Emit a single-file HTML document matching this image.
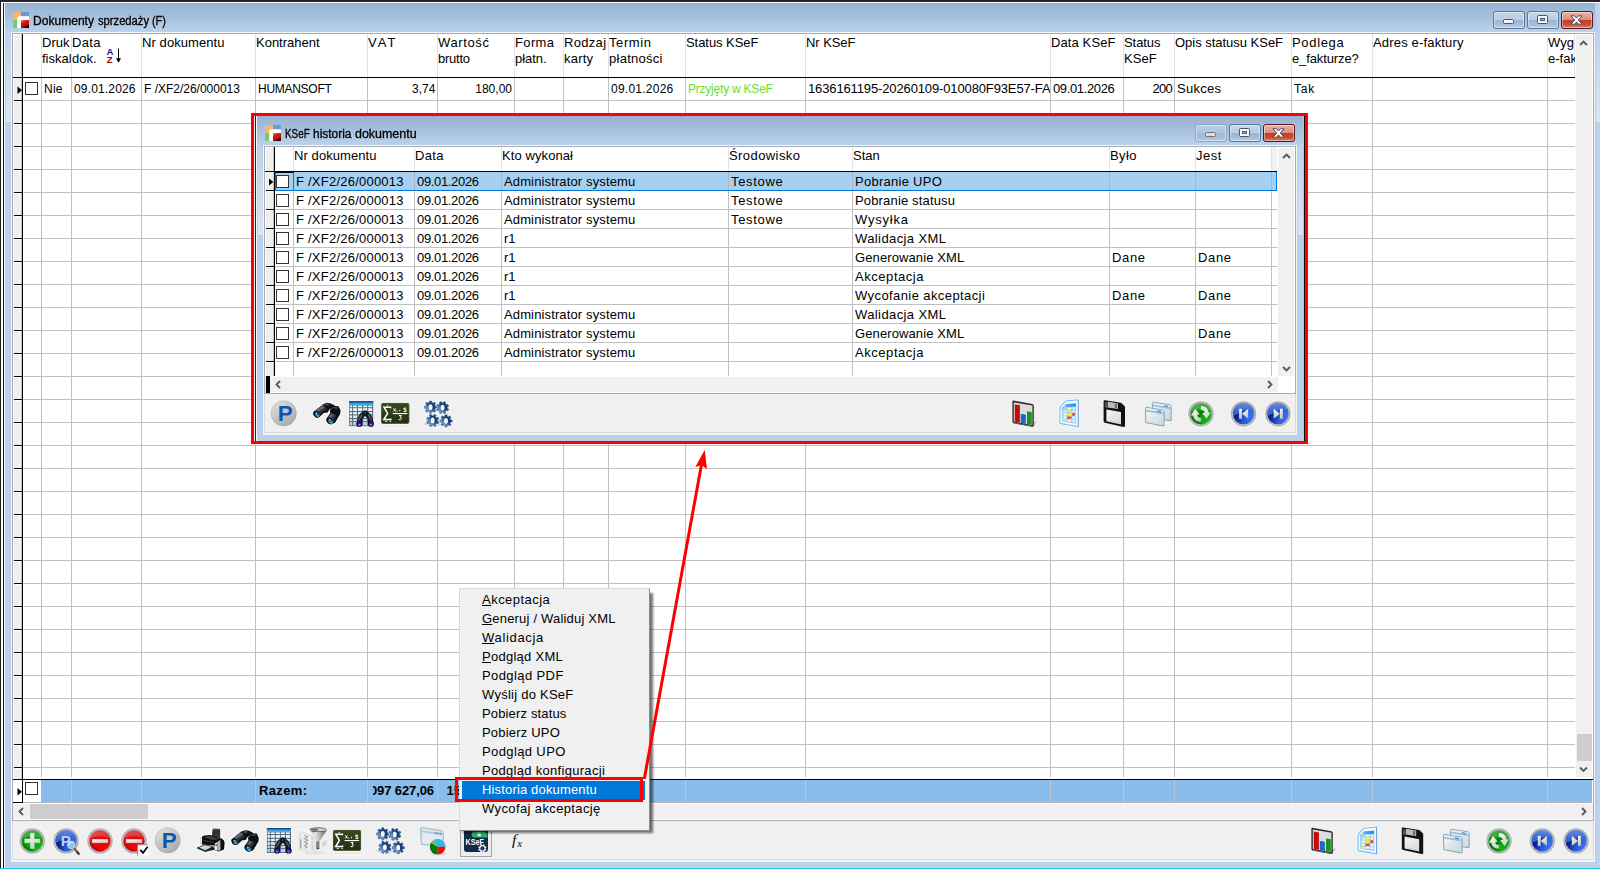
<!DOCTYPE html>
<html><head><meta charset="utf-8"><title>Dokumenty sprzedaży (F)</title>
<style>
html,body{margin:0;padding:0;}
body{width:1600px;height:869px;overflow:hidden;position:relative;background:#fff;font-family:"Liberation Sans",sans-serif;}
.a{position:absolute;}
.t{position:absolute;white-space:nowrap;color:#000;font-family:"Liberation Sans",sans-serif;}
.c{font-size:12px;line-height:14px;}
.d{font-size:13px;line-height:15px;}
.h{font-size:13px;line-height:16px;}
.w{font-size:12px;line-height:15px;-webkit-text-stroke:0.3px #000;}
.m{font-size:13px;line-height:19px;}
.b{font-size:13px;line-height:15px;font-weight:bold;}
svg{position:absolute;overflow:visible;left:0;top:0;}
u{text-decoration:underline;text-underline-offset:1px;}
</style></head>
<body>
<div class="a" style="left:0px;top:0px;width:1600px;height:869px;background:#b9d1ea;"></div>
<div class="a" style="left:0px;top:3px;width:1600px;height:30px;background:linear-gradient(#98b3d2,#a3bddb 40%,#b2cae5 75%,#bcd3eb);"></div>
<div class="a" style="left:0px;top:0px;width:1600px;height:2px;background:#262626;"></div>
<div class="a" style="left:0px;top:2px;width:1600px;height:1px;background:#ffffff;"></div>
<div class="a" style="left:0px;top:0px;width:1px;height:869px;background:#1a1a1a;"></div>
<div class="a" style="left:1px;top:3px;width:2px;height:866px;background:#ffffff;"></div>
<div class="a" style="left:3px;top:3px;width:1px;height:866px;background:#1a1a1a;"></div>
<div class="a" style="left:4px;top:3px;width:1px;height:866px;background:#f2f7fc;"></div>
<div class="a" style="left:1595px;top:3px;width:5px;height:866px;background:linear-gradient(90deg,#b5ceea,#bfd5ec);"></div>
<div class="a" style="left:0px;top:868px;width:1600px;height:1px;background:#2fc0de;"></div>
<div class="a" style="left:6px;top:33px;width:5px;height:89px;background:linear-gradient(#bcd3eb,#d9e5f3);"></div>
<div class="a" style="left:1596px;top:33px;width:4px;height:89px;background:linear-gradient(#bcd3eb,#d9e5f3);"></div>
<svg width="1600" height="869"><g transform="translate(13,12)"><rect x="0" y="0" width="8" height="8" fill="#fbb565"/><rect x="8" y="0" width="8" height="4.4" fill="#639bdb"/><rect x="0" y="8" width="4.2" height="8" fill="#6fcf6f"/><path d="M4.2 16V6.4Q4.2 4.2 6.4 4.2H16V16Z" fill="#fff"/><defs><linearGradient id="gAppR" x1="0" y1="0" x2=".5" y2="1"><stop offset="0" stop-color="#f08a8a"/><stop offset=".35" stop-color="#dc1c1c"/><stop offset=".75" stop-color="#b01010"/><stop offset="1" stop-color="#2a0404"/></linearGradient></defs><rect x="8" y="8" width="8" height="8" fill="url(#gAppR)"/></g></svg>
<div class="t w" style="left:33px;top:14px;transform:scaleX(1.0049);transform-origin:0 0;">Dokumenty</div>
<div class="t w" style="left:98px;top:14px;transform:scaleX(0.9323);transform-origin:0 0;">sprzedaży</div>
<div class="t w" style="left:152px;top:14px;transform:scaleX(0.9068);transform-origin:0 0;">(F)</div>
<div class="a" style="left:1493px;top:11px;width:32px;height:18px;box-sizing:border-box;border:1px solid #5d7596;border-radius:3px;background:#5d7596;overflow:hidden;"><div class="a" style="left:0;top:0;width:30px;height:8px;background:linear-gradient(#c4d6ea,#b9cde4);"></div><div class="a" style="left:0;top:8px;width:30px;height:8px;background:linear-gradient(#9ab5d3,#a3bcd9 55%,#b9cfe7);"></div><div class="a" style="left:0;top:0;width:28px;height:14px;border:1px solid rgba(255,255,255,.45);border-radius:2px;"></div></div>
<div class="a" style="left:1527px;top:11px;width:32px;height:18px;box-sizing:border-box;border:1px solid #5d7596;border-radius:3px;background:#5d7596;overflow:hidden;"><div class="a" style="left:0;top:0;width:30px;height:8px;background:linear-gradient(#c4d6ea,#b9cde4);"></div><div class="a" style="left:0;top:8px;width:30px;height:8px;background:linear-gradient(#9ab5d3,#a3bcd9 55%,#b9cfe7);"></div><div class="a" style="left:0;top:0;width:28px;height:14px;border:1px solid rgba(255,255,255,.45);border-radius:2px;"></div></div>
<div class="a" style="left:1561px;top:11px;width:32px;height:18px;box-sizing:border-box;border:1px solid #5b1626;border-radius:3px;background:#5b1626;overflow:hidden;"><div class="a" style="left:0;top:0;width:30px;height:8px;background:linear-gradient(#eab2a3,#dc8e7c);"></div><div class="a" style="left:0;top:8px;width:30px;height:8px;background:linear-gradient(#bf3d25,#c84e34 55%,#d98069);"></div><div class="a" style="left:0;top:0;width:28px;height:14px;border:1px solid rgba(255,255,255,.45);border-radius:2px;"></div></div>
<svg width="1600" height="869"><rect x="1503.5" y="19.5" width="10" height="4" rx="1" fill="#f4f4f2" stroke="#4a5568" stroke-width="1"/><rect x="1537.5" y="15.5" width="10" height="8" rx="1" fill="#f6f6f4" stroke="#4a5568" stroke-width="1"/><rect x="1540.5" y="18.5" width="4" height="2" fill="#a9c0dc" stroke="#4a5a78" stroke-width="1"/><path d="M1570.9 15.8h3.8l1.8 2.3 1.8-2.3h3.8l-3.8 4.2 3.8 4.2h-3.8l-1.8-2.3-1.8 2.3h-3.8l3.8-4.2z" fill="#fdfdfd" stroke="#4a4e64" stroke-width="1" stroke-linejoin="round"/></svg>
<div class="a" style="left:11px;top:32px;width:1584px;height:830px;background:#f3f5f8;"></div>
<div class="a" style="left:12px;top:33px;width:1582px;height:788px;background:#a9abb3;"></div>
<div class="a" style="left:13px;top:34px;width:1580px;height:786px;background:#ffffff;"></div>
<div class="a" style="left:13px;top:34px;width:9px;height:746px;background:#efefef;"></div>
<div class="a" style="left:13px;top:34px;width:1px;height:746px;background:#fff;"></div>
<div class="a" style="left:13px;top:34px;width:9px;height:1px;background:#fff;"></div>
<div class="a" style="left:21px;top:34px;width:1px;height:746px;background:#c4c4c4;"></div>
<div class="a" style="left:22px;top:34px;width:1px;height:746px;background:#000;"></div>
<div class="a" style="left:23px;top:100px;width:1552px;height:1px;background:#c0c0c0;"></div>
<div class="a" style="left:14px;top:100px;width:8px;height:1px;background:#000;"></div>
<div class="a" style="left:14px;top:101px;width:7px;height:1px;background:#fff;"></div>
<div class="a" style="left:23px;top:123px;width:1552px;height:1px;background:#c0c0c0;"></div>
<div class="a" style="left:14px;top:123px;width:8px;height:1px;background:#000;"></div>
<div class="a" style="left:14px;top:124px;width:7px;height:1px;background:#fff;"></div>
<div class="a" style="left:23px;top:146px;width:1552px;height:1px;background:#c0c0c0;"></div>
<div class="a" style="left:14px;top:146px;width:8px;height:1px;background:#000;"></div>
<div class="a" style="left:14px;top:147px;width:7px;height:1px;background:#fff;"></div>
<div class="a" style="left:23px;top:169px;width:1552px;height:1px;background:#c0c0c0;"></div>
<div class="a" style="left:14px;top:169px;width:8px;height:1px;background:#000;"></div>
<div class="a" style="left:14px;top:170px;width:7px;height:1px;background:#fff;"></div>
<div class="a" style="left:23px;top:192px;width:1552px;height:1px;background:#c0c0c0;"></div>
<div class="a" style="left:14px;top:192px;width:8px;height:1px;background:#000;"></div>
<div class="a" style="left:14px;top:193px;width:7px;height:1px;background:#fff;"></div>
<div class="a" style="left:23px;top:215px;width:1552px;height:1px;background:#c0c0c0;"></div>
<div class="a" style="left:14px;top:215px;width:8px;height:1px;background:#000;"></div>
<div class="a" style="left:14px;top:216px;width:7px;height:1px;background:#fff;"></div>
<div class="a" style="left:23px;top:238px;width:1552px;height:1px;background:#c0c0c0;"></div>
<div class="a" style="left:14px;top:238px;width:8px;height:1px;background:#000;"></div>
<div class="a" style="left:14px;top:239px;width:7px;height:1px;background:#fff;"></div>
<div class="a" style="left:23px;top:261px;width:1552px;height:1px;background:#c0c0c0;"></div>
<div class="a" style="left:14px;top:261px;width:8px;height:1px;background:#000;"></div>
<div class="a" style="left:14px;top:262px;width:7px;height:1px;background:#fff;"></div>
<div class="a" style="left:23px;top:284px;width:1552px;height:1px;background:#c0c0c0;"></div>
<div class="a" style="left:14px;top:284px;width:8px;height:1px;background:#000;"></div>
<div class="a" style="left:14px;top:285px;width:7px;height:1px;background:#fff;"></div>
<div class="a" style="left:23px;top:307px;width:1552px;height:1px;background:#c0c0c0;"></div>
<div class="a" style="left:14px;top:307px;width:8px;height:1px;background:#000;"></div>
<div class="a" style="left:14px;top:308px;width:7px;height:1px;background:#fff;"></div>
<div class="a" style="left:23px;top:330px;width:1552px;height:1px;background:#c0c0c0;"></div>
<div class="a" style="left:14px;top:330px;width:8px;height:1px;background:#000;"></div>
<div class="a" style="left:14px;top:331px;width:7px;height:1px;background:#fff;"></div>
<div class="a" style="left:23px;top:353px;width:1552px;height:1px;background:#c0c0c0;"></div>
<div class="a" style="left:14px;top:353px;width:8px;height:1px;background:#000;"></div>
<div class="a" style="left:14px;top:354px;width:7px;height:1px;background:#fff;"></div>
<div class="a" style="left:23px;top:376px;width:1552px;height:1px;background:#c0c0c0;"></div>
<div class="a" style="left:14px;top:376px;width:8px;height:1px;background:#000;"></div>
<div class="a" style="left:14px;top:377px;width:7px;height:1px;background:#fff;"></div>
<div class="a" style="left:23px;top:399px;width:1552px;height:1px;background:#c0c0c0;"></div>
<div class="a" style="left:14px;top:399px;width:8px;height:1px;background:#000;"></div>
<div class="a" style="left:14px;top:400px;width:7px;height:1px;background:#fff;"></div>
<div class="a" style="left:23px;top:422px;width:1552px;height:1px;background:#c0c0c0;"></div>
<div class="a" style="left:14px;top:422px;width:8px;height:1px;background:#000;"></div>
<div class="a" style="left:14px;top:423px;width:7px;height:1px;background:#fff;"></div>
<div class="a" style="left:23px;top:445px;width:1552px;height:1px;background:#c0c0c0;"></div>
<div class="a" style="left:14px;top:445px;width:8px;height:1px;background:#000;"></div>
<div class="a" style="left:14px;top:446px;width:7px;height:1px;background:#fff;"></div>
<div class="a" style="left:23px;top:468px;width:1552px;height:1px;background:#c0c0c0;"></div>
<div class="a" style="left:14px;top:468px;width:8px;height:1px;background:#000;"></div>
<div class="a" style="left:14px;top:469px;width:7px;height:1px;background:#fff;"></div>
<div class="a" style="left:23px;top:491px;width:1552px;height:1px;background:#c0c0c0;"></div>
<div class="a" style="left:14px;top:491px;width:8px;height:1px;background:#000;"></div>
<div class="a" style="left:14px;top:492px;width:7px;height:1px;background:#fff;"></div>
<div class="a" style="left:23px;top:514px;width:1552px;height:1px;background:#c0c0c0;"></div>
<div class="a" style="left:14px;top:514px;width:8px;height:1px;background:#000;"></div>
<div class="a" style="left:14px;top:515px;width:7px;height:1px;background:#fff;"></div>
<div class="a" style="left:23px;top:537px;width:1552px;height:1px;background:#c0c0c0;"></div>
<div class="a" style="left:14px;top:537px;width:8px;height:1px;background:#000;"></div>
<div class="a" style="left:14px;top:538px;width:7px;height:1px;background:#fff;"></div>
<div class="a" style="left:23px;top:560px;width:1552px;height:1px;background:#c0c0c0;"></div>
<div class="a" style="left:14px;top:560px;width:8px;height:1px;background:#000;"></div>
<div class="a" style="left:14px;top:561px;width:7px;height:1px;background:#fff;"></div>
<div class="a" style="left:23px;top:583px;width:1552px;height:1px;background:#c0c0c0;"></div>
<div class="a" style="left:14px;top:583px;width:8px;height:1px;background:#000;"></div>
<div class="a" style="left:14px;top:584px;width:7px;height:1px;background:#fff;"></div>
<div class="a" style="left:23px;top:606px;width:1552px;height:1px;background:#c0c0c0;"></div>
<div class="a" style="left:14px;top:606px;width:8px;height:1px;background:#000;"></div>
<div class="a" style="left:14px;top:607px;width:7px;height:1px;background:#fff;"></div>
<div class="a" style="left:23px;top:629px;width:1552px;height:1px;background:#c0c0c0;"></div>
<div class="a" style="left:14px;top:629px;width:8px;height:1px;background:#000;"></div>
<div class="a" style="left:14px;top:630px;width:7px;height:1px;background:#fff;"></div>
<div class="a" style="left:23px;top:652px;width:1552px;height:1px;background:#c0c0c0;"></div>
<div class="a" style="left:14px;top:652px;width:8px;height:1px;background:#000;"></div>
<div class="a" style="left:14px;top:653px;width:7px;height:1px;background:#fff;"></div>
<div class="a" style="left:23px;top:675px;width:1552px;height:1px;background:#c0c0c0;"></div>
<div class="a" style="left:14px;top:675px;width:8px;height:1px;background:#000;"></div>
<div class="a" style="left:14px;top:676px;width:7px;height:1px;background:#fff;"></div>
<div class="a" style="left:23px;top:698px;width:1552px;height:1px;background:#c0c0c0;"></div>
<div class="a" style="left:14px;top:698px;width:8px;height:1px;background:#000;"></div>
<div class="a" style="left:14px;top:699px;width:7px;height:1px;background:#fff;"></div>
<div class="a" style="left:23px;top:721px;width:1552px;height:1px;background:#c0c0c0;"></div>
<div class="a" style="left:14px;top:721px;width:8px;height:1px;background:#000;"></div>
<div class="a" style="left:14px;top:722px;width:7px;height:1px;background:#fff;"></div>
<div class="a" style="left:23px;top:744px;width:1552px;height:1px;background:#c0c0c0;"></div>
<div class="a" style="left:14px;top:744px;width:8px;height:1px;background:#000;"></div>
<div class="a" style="left:14px;top:745px;width:7px;height:1px;background:#fff;"></div>
<div class="a" style="left:23px;top:767px;width:1552px;height:1px;background:#c0c0c0;"></div>
<div class="a" style="left:14px;top:767px;width:8px;height:1px;background:#000;"></div>
<div class="a" style="left:14px;top:768px;width:7px;height:1px;background:#fff;"></div>
<div class="a" style="left:41px;top:34px;width:1px;height:43px;background:#e4e4e4;"></div>
<div class="a" style="left:41px;top:78px;width:1px;height:699px;background:#c0c0c0;"></div>
<div class="a" style="left:71px;top:34px;width:1px;height:43px;background:#e4e4e4;"></div>
<div class="a" style="left:71px;top:78px;width:1px;height:699px;background:#c0c0c0;"></div>
<div class="a" style="left:141px;top:34px;width:1px;height:43px;background:#e4e4e4;"></div>
<div class="a" style="left:141px;top:78px;width:1px;height:699px;background:#c0c0c0;"></div>
<div class="a" style="left:255px;top:34px;width:1px;height:43px;background:#e4e4e4;"></div>
<div class="a" style="left:255px;top:78px;width:1px;height:699px;background:#c0c0c0;"></div>
<div class="a" style="left:367px;top:34px;width:1px;height:43px;background:#e4e4e4;"></div>
<div class="a" style="left:367px;top:78px;width:1px;height:699px;background:#c0c0c0;"></div>
<div class="a" style="left:437px;top:34px;width:1px;height:43px;background:#e4e4e4;"></div>
<div class="a" style="left:437px;top:78px;width:1px;height:699px;background:#c0c0c0;"></div>
<div class="a" style="left:514px;top:34px;width:1px;height:43px;background:#e4e4e4;"></div>
<div class="a" style="left:514px;top:78px;width:1px;height:699px;background:#c0c0c0;"></div>
<div class="a" style="left:563px;top:34px;width:1px;height:43px;background:#e4e4e4;"></div>
<div class="a" style="left:563px;top:78px;width:1px;height:699px;background:#c0c0c0;"></div>
<div class="a" style="left:608px;top:34px;width:1px;height:43px;background:#e4e4e4;"></div>
<div class="a" style="left:608px;top:78px;width:1px;height:699px;background:#c0c0c0;"></div>
<div class="a" style="left:685px;top:34px;width:1px;height:43px;background:#e4e4e4;"></div>
<div class="a" style="left:685px;top:78px;width:1px;height:699px;background:#c0c0c0;"></div>
<div class="a" style="left:805px;top:34px;width:1px;height:43px;background:#e4e4e4;"></div>
<div class="a" style="left:805px;top:78px;width:1px;height:699px;background:#c0c0c0;"></div>
<div class="a" style="left:1050px;top:34px;width:1px;height:43px;background:#e4e4e4;"></div>
<div class="a" style="left:1050px;top:78px;width:1px;height:699px;background:#c0c0c0;"></div>
<div class="a" style="left:1123px;top:34px;width:1px;height:43px;background:#e4e4e4;"></div>
<div class="a" style="left:1123px;top:78px;width:1px;height:699px;background:#c0c0c0;"></div>
<div class="a" style="left:1174px;top:34px;width:1px;height:43px;background:#e4e4e4;"></div>
<div class="a" style="left:1174px;top:78px;width:1px;height:699px;background:#c0c0c0;"></div>
<div class="a" style="left:1291px;top:34px;width:1px;height:43px;background:#e4e4e4;"></div>
<div class="a" style="left:1291px;top:78px;width:1px;height:699px;background:#c0c0c0;"></div>
<div class="a" style="left:1372px;top:34px;width:1px;height:43px;background:#e4e4e4;"></div>
<div class="a" style="left:1372px;top:78px;width:1px;height:699px;background:#c0c0c0;"></div>
<div class="a" style="left:1547px;top:34px;width:1px;height:43px;background:#e4e4e4;"></div>
<div class="a" style="left:1547px;top:78px;width:1px;height:699px;background:#c0c0c0;"></div>
<div class="a" style="left:1574px;top:34px;width:1px;height:43px;background:#e4e4e4;"></div>
<div class="a" style="left:13px;top:77px;width:1562px;height:1px;background:#000;"></div>
<div class="a" style="left:13px;top:779px;width:1580px;height:1px;background:#000;"></div>
<div class="a" style="left:13px;top:780px;width:1579px;height:23px;background:#8abdeb;"></div>
<div class="a" style="left:13px;top:780px;width:28px;height:23px;background:#fff;"></div>
<div class="a" style="left:22px;top:780px;width:1px;height:23px;background:#000;"></div>
<div class="a" style="left:23px;top:802px;width:1569px;height:1px;background:#b2b6ba;"></div>
<div class="a" style="left:13px;top:802px;width:9px;height:1px;background:#000;"></div>
<div class="a" style="left:71px;top:780px;width:1px;height:23px;background:#b9c4cf;"></div>
<div class="a" style="left:141px;top:780px;width:1px;height:23px;background:#b9c4cf;"></div>
<div class="a" style="left:255px;top:780px;width:1px;height:23px;background:#b9c4cf;"></div>
<div class="a" style="left:367px;top:780px;width:1px;height:23px;background:#b9c4cf;"></div>
<div class="a" style="left:437px;top:780px;width:1px;height:23px;background:#b9c4cf;"></div>
<div class="a" style="left:514px;top:780px;width:1px;height:23px;background:#b9c4cf;"></div>
<div class="a" style="left:563px;top:780px;width:1px;height:23px;background:#b9c4cf;"></div>
<div class="a" style="left:608px;top:780px;width:1px;height:23px;background:#b9c4cf;"></div>
<div class="a" style="left:685px;top:780px;width:1px;height:23px;background:#b9c4cf;"></div>
<div class="a" style="left:805px;top:780px;width:1px;height:23px;background:#b9c4cf;"></div>
<div class="a" style="left:1050px;top:780px;width:1px;height:23px;background:#b9c4cf;"></div>
<div class="a" style="left:1123px;top:780px;width:1px;height:23px;background:#b9c4cf;"></div>
<div class="a" style="left:1174px;top:780px;width:1px;height:23px;background:#b9c4cf;"></div>
<div class="a" style="left:1291px;top:780px;width:1px;height:23px;background:#b9c4cf;"></div>
<div class="a" style="left:1372px;top:780px;width:1px;height:23px;background:#b9c4cf;"></div>
<div class="a" style="left:1547px;top:780px;width:1px;height:23px;background:#b9c4cf;"></div>
<div class="a" style="left:1576px;top:35px;width:16px;height:742px;background:#f0f0f0;"></div>
<div class="a" style="left:1577px;top:734px;width:15px;height:27px;background:#cdcdcd;"></div>
<div class="a" style="left:13px;top:803px;width:1580px;height:17px;background:#fff;"></div>
<div class="a" style="left:13px;top:804px;width:1580px;height:15px;background:#f0f0f0;"></div>
<div class="a" style="left:30px;top:804px;width:118px;height:15px;background:#cdcdcd;"></div>
<div class="a" style="left:12px;top:821px;width:1582px;height:39px;background:#d9d9d9;"></div>
<div class="a" style="left:13px;top:821px;width:1580px;height:38px;background:#f0f0f0;"></div>
<div class="a" style="left:42px;top:35px;width:29px;height:42px;overflow:hidden;">
<div class="t h" style="left:0px;top:0px;">Druk</div>
<div class="t h" style="left:0px;top:16px;">fiskal</div>
</div>
<div class="a" style="left:72px;top:35px;width:69px;height:42px;overflow:hidden;">
<div class="t h" style="left:0px;top:0px;letter-spacing:0.34px;">Data</div>
<div class="t h" style="left:0px;top:16px;">dok.</div>
</div>
<div class="a" style="left:142px;top:35px;width:113px;height:42px;overflow:hidden;">
<div class="t h" style="left:0px;top:0px;letter-spacing:0.08px;">Nr dokumentu</div>
</div>
<div class="a" style="left:256px;top:35px;width:111px;height:42px;overflow:hidden;">
<div class="t h" style="left:0px;top:0px;letter-spacing:-0.01px;">Kontrahent</div>
</div>
<div class="a" style="left:368px;top:35px;width:69px;height:42px;overflow:hidden;">
<div class="t h" style="left:0px;top:0px;letter-spacing:2.07px;">VAT</div>
</div>
<div class="a" style="left:438px;top:35px;width:76px;height:42px;overflow:hidden;">
<div class="t h" style="left:0px;top:0px;letter-spacing:0.63px;">Wartość</div>
<div class="t h" style="left:0px;top:16px;letter-spacing:-0.25px;">brutto</div>
</div>
<div class="a" style="left:515px;top:35px;width:48px;height:42px;overflow:hidden;">
<div class="t h" style="left:0px;top:0px;letter-spacing:0.36px;">Forma</div>
<div class="t h" style="left:0px;top:16px;letter-spacing:-0.06px;">płatn.</div>
</div>
<div class="a" style="left:564px;top:35px;width:44px;height:42px;overflow:hidden;">
<div class="t h" style="left:0px;top:0px;letter-spacing:0.31px;">Rodzaj</div>
<div class="t h" style="left:0px;top:16px;letter-spacing:0.21px;">karty</div>
</div>
<div class="a" style="left:609px;top:35px;width:76px;height:42px;overflow:hidden;">
<div class="t h" style="left:0px;top:0px;letter-spacing:0.60px;">Termin</div>
<div class="t h" style="left:0px;top:16px;letter-spacing:0.27px;">płatności</div>
</div>
<div class="a" style="left:686px;top:35px;width:119px;height:42px;overflow:hidden;">
<div class="t h" style="left:0px;top:0px;letter-spacing:-0.05px;">Status KSeF</div>
</div>
<div class="a" style="left:806px;top:35px;width:244px;height:42px;overflow:hidden;">
<div class="t h" style="left:0px;top:0px;letter-spacing:-0.06px;">Nr KSeF</div>
</div>
<div class="a" style="left:1051px;top:35px;width:72px;height:42px;overflow:hidden;">
<div class="t h" style="left:0px;top:0px;letter-spacing:0.11px;">Data KSeF</div>
</div>
<div class="a" style="left:1124px;top:35px;width:50px;height:42px;overflow:hidden;">
<div class="t h" style="left:0px;top:0px;letter-spacing:-0.07px;">Status</div>
<div class="t h" style="left:0px;top:16px;letter-spacing:0.08px;">KSeF</div>
</div>
<div class="a" style="left:1175px;top:35px;width:116px;height:42px;overflow:hidden;">
<div class="t h" style="left:0px;top:0px;letter-spacing:-0.02px;">Opis statusu KSeF</div>
</div>
<div class="a" style="left:1292px;top:35px;width:80px;height:42px;overflow:hidden;">
<div class="t h" style="left:0px;top:0px;letter-spacing:0.67px;">Podlega</div>
<div class="t h" style="left:0px;top:16px;letter-spacing:-0.12px;">e_fakturze?</div>
</div>
<div class="a" style="left:1373px;top:35px;width:174px;height:42px;overflow:hidden;">
<div class="t h" style="left:0px;top:0px;letter-spacing:0.17px;">Adres e-faktury</div>
</div>
<div class="a" style="left:1548px;top:35px;width:27px;height:42px;overflow:hidden;">
<div class="t h" style="left:0px;top:0px;">Wyg</div>
<div class="t h" style="left:0px;top:16px;">e-fak</div>
</div>
<svg width="1600" height="869"><text x="106.6" y="55" font-family="Liberation Sans" font-weight="bold" font-size="9.5" fill="#0a0a9a">A</text><text x="106.8" y="62.6" font-family="Liberation Sans" font-weight="bold" font-size="9.5" fill="#8a0a0a">Z</text><path d="M118.5 48.5V59" stroke="#000" stroke-width="1"/><path d="M116 58.2h5l-2.5 4.6z" fill="#000"/></svg>
<div class="a" style="left:25px;top:82px;width:13px;height:13px;box-sizing:border-box;border:1px solid #333;background:#fff;"></div>
<div class="t c" style="left:44px;top:82px;letter-spacing:0.24px;">Nie</div>
<div class="t c" style="left:74px;top:82px;letter-spacing:0.16px;">09.01.2026</div>
<div class="t c" style="left:144px;top:82px;letter-spacing:-0.01px;">F /XF2/26/000013</div>
<div class="t c" style="left:258px;top:82px;letter-spacing:-0.28px;">HUMANSOFT</div>
<div class="t c" style="right:1164.5px;top:82px;letter-spacing:0.05px;">3,74</div>
<div class="t c" style="right:1088px;top:82px;letter-spacing:0.01px;">180,00</div>
<div class="t c" style="left:611px;top:82px;letter-spacing:0.24px;">09.01.2026</div>
<div class="t c" style="left:688px;top:82px;letter-spacing:-0.22px;color:#66e02e;">Przyjęty w KSeF</div>
<div class="a" style="left:806px;top:78px;width:244px;height:22px;overflow:hidden;">
<div class="t d" style="left:2px;top:3px;letter-spacing:-0.13px;">1636161195-20260109-010080F93E57-FA</div>
</div>
<div class="t d" style="left:1053px;top:81px;letter-spacing:-0.37px;">09.01.2026</div>
<div class="t d" style="right:428px;top:81px;letter-spacing:-0.73px;">200</div>
<div class="t d" style="left:1177px;top:81px;letter-spacing:0.27px;">Sukces</div>
<div class="t c" style="left:1294px;top:82px;letter-spacing:0.78px;">Tak</div>
<div class="a" style="left:25px;top:782px;width:13px;height:13px;box-sizing:border-box;border:1px solid #333;background:#fff;"></div>
<div class="t b" style="left:259px;top:782.5px;letter-spacing:0.35px;">Razem:</div>
<div class="a" style="left:373px;top:780px;width:64px;height:22px;overflow:hidden;">
<div class="t b" style="left:-3px;top:2.5px;letter-spacing:-0.12px;">097 627,06</div>
</div>
<div class="a" style="left:440px;top:780px;width:19px;height:22px;overflow:hidden;">
<div class="t b" style="left:6.5px;top:2.5px;">15</div>
</div>
<svg width="1600" height="869"><path d="M17.5 86.5v7.5l4.5-3.75z" fill="#000"/><path d="M17.5 788v7.5l4.5-3.75z" fill="#000"/><path d="M1580.0 45 L1583.5 41.5 L1587.0 45" fill="none" stroke="#5a5a5a" stroke-width="1.9"/><path d="M1580.0 767.5 L1583.5 771.0 L1587.0 767.5" fill="none" stroke="#5a5a5a" stroke-width="1.9"/><path d="M23 808.0 L19.5 811.5 L23 815.0" fill="none" stroke="#5a5a5a" stroke-width="1.9"/><path d="M1582 808.0 L1585.5 811.5 L1582 815.0" fill="none" stroke="#5a5a5a" stroke-width="1.9"/></svg>
<svg width="1600" height="869"><defs>
<linearGradient id="gRing" x1="0" y1="0" x2="0" y2="1"><stop offset="0" stop-color="#dedede"/><stop offset=".5" stop-color="#cdcdcd"/><stop offset="1" stop-color="#d8d8d8"/></linearGradient>
<linearGradient id="gGreen" x1="0" y1="0" x2=".6" y2="1"><stop offset="0" stop-color="#2f9a3a"/><stop offset=".45" stop-color="#079a07"/><stop offset="1" stop-color="#14b414"/></linearGradient>
<linearGradient id="gRed" x1="0" y1="0" x2=".4" y2="1"><stop offset="0" stop-color="#c93a3a"/><stop offset=".5" stop-color="#e20707"/><stop offset="1" stop-color="#f00606"/></linearGradient>
<linearGradient id="gBlue" x1="0" y1="0" x2="0" y2="1"><stop offset="0" stop-color="#5a82d4"/><stop offset=".5" stop-color="#2d5fd0"/><stop offset="1" stop-color="#3f78f2"/></linearGradient>
<linearGradient id="gBlueB" x1="0" y1=".35" x2="1" y2=".75"><stop offset="0" stop-color="#071a78"/><stop offset=".3" stop-color="#0c2a9a"/><stop offset=".62" stop-color="#2a5ee0"/><stop offset="1" stop-color="#4078f6"/></linearGradient>
<linearGradient id="gBlueT" x1="0" y1="0" x2="0" y2="1"><stop offset="0" stop-color="#6a8cdc"/><stop offset=".55" stop-color="#3f6ed2"/><stop offset="1" stop-color="#2a5ccc"/></linearGradient>
<linearGradient id="gWhiteV" x1="0" y1="0" x2=".3" y2="1"><stop offset="0" stop-color="#fafafa"/><stop offset="1" stop-color="#c6c6c6"/></linearGradient>
<linearGradient id="gSilver" x1="0" y1="0" x2=".7" y2="1"><stop offset="0" stop-color="#e4e4e4"/><stop offset=".5" stop-color="#c8c8c8"/><stop offset="1" stop-color="#aaaaaa"/></linearGradient>
<linearGradient id="gWhiteG" x1="0" y1="0" x2="1" y2="1"><stop offset="0" stop-color="#ffffff"/><stop offset="1" stop-color="#c4c4c4"/></linearGradient>
<linearGradient id="gBarrel" x1="0" y1="0" x2="1" y2="0"><stop offset="0" stop-color="#555a60"/><stop offset=".45" stop-color="#1c1e22"/><stop offset="1" stop-color="#08090b"/></linearGradient>
<linearGradient id="gTblHead" x1="0" y1="0" x2="0" y2="1"><stop offset="0" stop-color="#1458b8"/><stop offset="1" stop-color="#4fc0ea"/></linearGradient>
<linearGradient id="gCell" x1="0" y1="0" x2="0" y2="1"><stop offset="0" stop-color="#ffffff"/><stop offset="1" stop-color="#cfdde2"/></linearGradient>
<linearGradient id="gBoard" x1="0" y1="0" x2="0" y2="1"><stop offset="0" stop-color="#3a4a1e"/><stop offset="1" stop-color="#222e12"/></linearGradient>
<linearGradient id="gGear" x1="1" y1="0" x2="0" y2="1"><stop offset="0" stop-color="#2a5a92"/><stop offset=".4" stop-color="#173f78"/><stop offset=".72" stop-color="#6f98c4"/><stop offset="1" stop-color="#0e2f60"/></linearGradient>
<linearGradient id="gWin" x1="0" y1="0" x2="1" y2="1"><stop offset="0" stop-color="#fbfcfd"/><stop offset=".5" stop-color="#dde6ea"/><stop offset="1" stop-color="#c8d6dc"/></linearGradient>
<linearGradient id="gFunnel" x1="0" y1="0" x2="1" y2="0"><stop offset="0" stop-color="#8a8a8a"/><stop offset=".5" stop-color="#e0e0e0"/><stop offset="1" stop-color="#9a9a9a"/></linearGradient>
<linearGradient id="gLens" x1="0" y1="0" x2="1" y2="1"><stop offset="0" stop-color="#061a34"/><stop offset=".5" stop-color="#1f6fa4"/><stop offset="1" stop-color="#86e4ee"/></linearGradient>
<linearGradient id="gLabel" x1="0" y1="0" x2="1" y2="1"><stop offset="0" stop-color="#f6f6f6"/><stop offset="1" stop-color="#d8d8d8"/></linearGradient>
<linearGradient id="gPaper" x1="0" y1="0" x2="1" y2="1"><stop offset="0" stop-color="#d8f0f4"/><stop offset="1" stop-color="#9ccfdc"/></linearGradient>
</defs><g transform="translate(32.3,840.9)"><circle r="14.0" fill="#fff" opacity=".55"/><circle r="13.1" fill="#d6d6d6"/><circle r="12.4" fill="#a4a4a4"/><circle r="11.6" fill="#d0d0d0"/><circle r="11.0" fill="#a8a8a8"/><circle r="10.55" fill="url(#gGreen)"/><path d="M-10.4 1.5 A10.55 10.55 0 0 0 2 10.35 Q-5 6 -10.4 1.5Z" fill="#006a00" opacity=".55"/><path d="M-10.2 -2.6 A10.55 10.55 0 0 1 10.2 -2.6 Q0 -6.5 -10.2 -2.6Z" fill="#fff" opacity=".18"/><path d="M-1.9 -7.6h3.8v5.7h5.7v3.8h-5.7v5.7h-3.8v-5.7h-5.7v-3.8h5.7z" fill="url(#gWhiteG)" stroke="#fff" stroke-opacity=".35" stroke-width=".8"/></g><g transform="translate(66.1,840.9)"><circle r="14.0" fill="#fff" opacity=".55"/><circle r="13.1" fill="#d6d6d6"/><circle r="12.4" fill="#a4a4a4"/><circle r="11.6" fill="#d0d0d0"/><circle r="11.0" fill="#a8a8a8"/><circle r="10.55" fill="url(#gBlueB)"/><path d="M-10.45 1.5 Q-5 -0.4 0.2 -3.9 Q5 -4.4 10.3 -2.4 A10.55 10.55 0 0 0 -10.45 1.5Z" fill="url(#gBlueT)"/><path d="M-10.45 1.5 Q-5 -0.4 0.2 -3.9" fill="none" stroke="#86a6e8" stroke-width=".5" opacity=".7"/><text x="-5.4" y="4.6" font-family="Liberation Sans" font-weight="bold" font-size="15" fill="#b4d4f2">P</text><path d="M7.6 6.6L12.4 12.6" stroke="#7a5a30" stroke-width="2.1" stroke-linecap="round"/><path d="M11.2 11.4L12.6 13" stroke="#3c3c3c" stroke-width="2.2" stroke-linecap="round"/><circle cx="5.2" cy="4" r="3.6" fill="#8fc4ea" stroke="#c8d4dc" stroke-width="1.1"/><path d="M2.6 4.6a2.8 2.8 0 0 1 4-2.8" stroke="#e8f4ff" stroke-width="1" fill="none"/></g><g transform="translate(100,840.9)"><circle r="14.0" fill="#fff" opacity=".55"/><circle r="13.1" fill="#d6d6d6"/><circle r="12.4" fill="#a4a4a4"/><circle r="11.6" fill="#d0d0d0"/><circle r="11.0" fill="#a8a8a8"/><circle r="10.55" fill="url(#gRed)"/><path d="M-10.4 1.5 A10.55 10.55 0 0 0 2 10.35 Q-5 6 -10.4 1.5Z" fill="#a00000" opacity=".45"/><path d="M-10.2 -2.6 A10.55 10.55 0 0 1 10.2 -2.6 Q0 -6.5 -10.2 -2.6Z" fill="#fff" opacity=".18"/><rect x="-7.9" y="-1.6" width="15.8" height="3.5" fill="url(#gWhiteG)" stroke="#fff" stroke-opacity=".35" stroke-width=".7"/></g><g transform="translate(134,840.9)"><circle r="14.0" fill="#fff" opacity=".55"/><circle r="13.1" fill="#d6d6d6"/><circle r="12.4" fill="#a4a4a4"/><circle r="11.6" fill="#d0d0d0"/><circle r="11.0" fill="#a8a8a8"/><circle r="10.55" fill="url(#gRed)"/><path d="M-10.4 1.5 A10.55 10.55 0 0 0 2 10.35 Q-5 6 -10.4 1.5Z" fill="#a00000" opacity=".45"/><path d="M-10.2 -2.6 A10.55 10.55 0 0 1 10.2 -2.6 Q0 -6.5 -10.2 -2.6Z" fill="#fff" opacity=".18"/><rect x="-7.9" y="-1.6" width="15.8" height="3.5" fill="url(#gWhiteG)" stroke="#fff" stroke-opacity=".35" stroke-width=".7"/><rect x="3.6" y="3.8" width="10.6" height="10.8" fill="#fff"/><path d="M3.6 14.6V3.8H14.2" fill="none" stroke="#8e8e8e" stroke-width="1.1"/><path d="M5.6 9.6l1.3-1.2 2.1 2.1 4-5.2 1.3 1-5.2 7z" fill="#000"/></g><g transform="translate(167.6,840.3)"><circle r="13.4" fill="#fff" opacity=".5"/><circle r="12.9" fill="url(#gSilver)"/><circle r="12.6" fill="none" stroke="#9e9e9e" stroke-opacity=".55" stroke-width=".7"/><text x="-5.9" y="8" font-family="Liberation Sans" font-weight="bold" font-size="22.5" fill="#0b55b3" stroke="#e6d2c0" stroke-width=".5" paint-order="stroke">P</text></g><g transform="translate(192,824.0)"><path d="M20 5 L28 5 L28.4 13.6 L32.4 17.2 L32 25.6 L27 27.6 L22.8 26.6 L13.4 28 L5 23.6 L7.8 20.4 L7.8 13 L10.2 12.4 L18 11 L19.6 11.4Z" fill="none" stroke="#fff" stroke-width="2" stroke-linejoin="round" opacity=".8"/><defs><linearGradient id="gPrT" x1="0" y1="0" x2="0" y2="1"><stop offset="0" stop-color="#5a5a5a"/><stop offset=".3" stop-color="#2c2c2c"/><stop offset="1" stop-color="#3a3a3a"/></linearGradient></defs><path d="M20.6 4.8 Q20.8 4.4 21.4 4.4 L27.4 4.8 Q28.2 4.9 28.2 5.8 L28.2 14 L19.8 13 Z" fill="url(#gPrT)"/><path d="M7.8 13.4 L9.6 12.8 L9.6 20.4 L7.8 20.4Z" fill="#d4d8da"/><path d="M10 12.8 Q10.6 11.6 12.4 11.4 L18 11 L29.4 14.4 Q32.8 16 32.6 19.4 L32 25.4 L27 27.5 L22.6 26.4 L22.6 21.4 L10 20.6 Z" fill="#0c0c0c"/><path d="M11 13 L18 11.8 L27.6 14.8 L21.4 16.2 Z" fill="#3c3c3c"/><path d="M10.4 15.6 L21.6 17.6 L22.4 19.2 L10.4 17.2Z" fill="#2e2e2e"/><path d="M22.8 19.4 L25.2 18.2 L25.4 26.4 L22.8 26.6Z" fill="#f2f2f2"/><rect x="23.4" y="20.3" width="1.6" height="1.8" rx=".4" fill="#2a4ee6"/><path d="M25.2 18.2 L28.4 15.8 L28.6 26.6 L25.4 26.4Z" fill="#9aa4a6"/><path d="M26.2 17.4 L27.2 16.8 L27.4 26.4 L26.4 26.4Z" fill="#c8d0d0"/><path d="M5 23.4 L12.8 20.4 L21.2 22.2 L22.8 25.4 L13.4 28 L5 24.6 Z" fill="#2a2a2a"/><path d="M7 23.4 L13 21.2 L20 22.8 L13.4 26.2 Z" fill="url(#gPaper)"/><path d="M18 25.2 L21.6 23.8 L22.6 25.2 L19 26.6Z" fill="#141414"/></g><g transform="translate(226.0,824) scale(1.0)"><path d="M5.6 15.2 L15.2 7.6 L19 6.2 L22.5 6.6 L26.8 8.6 L27 10.5 L21.5 13 L20 15.8 L16 16.5 L11.6 20.4 Q8.5 22.2 6.2 19.2 Q5 17 5.6 15.2 Z" fill="none" stroke="#fff" stroke-width="2.2" stroke-linejoin="round" opacity=".85"/><path d="M22 13.5 L27 9.2 L30.8 9.6 L32.8 14 L32.4 17.5 L27.4 26 Q24.5 28.6 20.4 26.6 Q18 24.6 18.6 22 L22.4 16.6 Z" fill="none" stroke="#fff" stroke-width="2.2" stroke-linejoin="round" opacity=".85"/><path d="M5.6 15.2 L15.2 7.6 L19 6.2 L22.5 6.6 L26.8 8.6 L27 10.5 L21.5 13 L20 15.8 L16 16.5 L11.6 20.4 Q8.5 22.2 6.2 19.2 Q5 17 5.6 15.2 Z" fill="#111317"/><path d="M22 13.5 L27 9.2 L30.8 9.6 L32.8 14 L32.4 17.5 L27.4 26 Q24.5 28.6 20.4 26.6 Q18 24.6 18.6 22 L22.4 16.6 Z" fill="#0d0f12"/><path d="M6.6 14.6 L15 8.2 L17.4 10.6 L9.6 16 Z" fill="#7b828a" opacity=".75"/><path d="M9.6 16 L17.4 10.6 L18.6 12.4 L11.4 17.6Z" fill="#3a4048" opacity=".8"/><path d="M20 21 L23.4 16.6 L26.6 17.6 L23.2 22.6 Z" fill="#7b828a" opacity=".7"/><path d="M23.2 22.6 L26.6 17.6 L28.6 18.4 L25.6 23.6Z" fill="#3a4048" opacity=".8"/><path d="M16 8 L19.4 7 L22 7.4 L20.4 9.2 Z" fill="#5a6068" opacity=".8"/><path d="M24 11 L28 9.8 L30.4 10.4 L28.6 12.6Z" fill="#474d55" opacity=".8"/><ellipse cx="8.9" cy="17.7" rx="3.5" ry="2.9" transform="rotate(42 8.9 17.7)" fill="#04070b"/><ellipse cx="9.4" cy="17.9" rx="2.7" ry="2.1" transform="rotate(42 9.4 17.9)" fill="url(#gLens)"/><ellipse cx="8.6" cy="16.6" rx="1.0" ry=".6" transform="rotate(42 8.6 16.6)" fill="#dff" opacity=".8"/><ellipse cx="22.2" cy="24.3" rx="3.7" ry="3.0" transform="rotate(38 22.2 24.3)" fill="#04070b"/><ellipse cx="22.8" cy="24.5" rx="2.9" ry="2.2" transform="rotate(38 22.8 24.5)" fill="url(#gLens)"/><ellipse cx="21.8" cy="23.2" rx="1.0" ry=".6" transform="rotate(38 21.8 23.2)" fill="#dff" opacity=".8"/></g><g transform="translate(262.0,824.0)"><rect x="4.4" y="3.6" width="25.1" height="25.9" fill="#fff" opacity=".75"/><rect x="4.9" y="4.1" width="24.1" height="24.9" fill="#4c6c82"/><rect x="4.9" y="4.1" width="24.1" height="3.7" fill="url(#gTblHead)"/><rect x="4.9" y="4.1" width="24.1" height="1" fill="#1c3f86"/><rect x="4.9" y="6.8" width="24.1" height="1" fill="#35bdea"/><rect x="5.6" y="8.4" width="2.3" height="1.6" fill="#ffffff"/><rect x="8.9" y="8.4" width="3.9" height="1.6" fill="#ffffff"/><rect x="13.8" y="8.4" width="4.1" height="1.6" fill="#ffffff"/><rect x="18.9" y="8.4" width="4.1" height="1.6" fill="#ffffff"/><rect x="24.0" y="8.4" width="3.9" height="1.6" fill="#ffffff"/><rect x="5.6" y="11.0" width="2.3" height="2.8" fill="#f4f7f8"/><rect x="8.9" y="11.0" width="3.9" height="2.8" fill="#f4f7f8"/><rect x="13.8" y="11.0" width="4.1" height="2.8" fill="#f4f7f8"/><rect x="18.9" y="11.0" width="4.1" height="2.8" fill="#f4f7f8"/><rect x="24.0" y="11.0" width="3.9" height="2.8" fill="#f4f7f8"/><rect x="5.6" y="14.9" width="2.3" height="2.2" fill="#eef2f4"/><rect x="8.9" y="14.9" width="3.9" height="2.2" fill="#eef2f4"/><rect x="13.8" y="14.9" width="4.1" height="2.2" fill="#eef2f4"/><rect x="18.9" y="14.9" width="4.1" height="2.2" fill="#eef2f4"/><rect x="24.0" y="14.9" width="3.9" height="2.2" fill="#eef2f4"/><rect x="5.6" y="18.2" width="2.3" height="2.6" fill="#e4eaed"/><rect x="8.9" y="18.2" width="3.9" height="2.6" fill="#e4eaed"/><rect x="13.8" y="18.2" width="4.1" height="2.6" fill="#e4eaed"/><rect x="18.9" y="18.2" width="4.1" height="2.6" fill="#e4eaed"/><rect x="24.0" y="18.2" width="3.9" height="2.6" fill="#e4eaed"/><rect x="5.6" y="21.9" width="2.3" height="2.0" fill="#d4dde2"/><rect x="8.9" y="21.9" width="3.9" height="2.0" fill="#d4dde2"/><rect x="13.8" y="21.9" width="4.1" height="2.0" fill="#d4dde2"/><rect x="18.9" y="21.9" width="4.1" height="2.0" fill="#d4dde2"/><rect x="24.0" y="21.9" width="3.9" height="2.0" fill="#d4dde2"/><rect x="5.6" y="24.9" width="2.3" height="3.2" fill="#c6d2d8"/><rect x="8.9" y="24.9" width="3.9" height="3.2" fill="#c6d2d8"/><rect x="13.8" y="24.9" width="4.1" height="3.2" fill="#c6d2d8"/><rect x="18.9" y="24.9" width="4.1" height="3.2" fill="#c6d2d8"/><rect x="24.0" y="24.9" width="3.9" height="3.2" fill="#c6d2d8"/><path d="M18.4 14.4 L20.3 13.5 L21.3 15.6 L20.7 19 L18.4 21.6 L17.9 27.2 Q15.2 30.6 12.4 27.2 L13.2 21.2 L15.6 16.8 Z" fill="#161a22"/><path d="M23.4 14.4 L21.5 13.5 L20.5 15.6 L21.1 19 L23.4 21.6 L23.9 27.2 Q26.6 30.6 29.4 27.2 L28.6 21.2 L26.2 16.8 Z" fill="#161a22"/><path d="M19.4 13.4 L22.4 13.4 L22.6 17.6 L20.9 18.8 L19.2 17.6Z" fill="#0c0e14"/><path d="M17.4 16.6 L14.4 21.6 L14 25 L16 21.8 L18.4 18Z" fill="#55657e" opacity=".85"/><path d="M24.4 16.6 L27.4 21.6 L27.8 25 L25.8 21.8 L23.4 18Z" fill="#55657e" opacity=".85"/><path d="M20 14.6 L21.8 14.6 L21.6 17 L20.2 17Z" fill="#4a5a70" opacity=".8"/><circle cx="15.1" cy="26.7" r="2.9" fill="#05060a"/><circle cx="15.1" cy="26.5" r="2.1" fill="#3a0ec4"/><ellipse cx="15.1" cy="27.6" rx="1.5" ry=".9" fill="#9478d8"/><circle cx="26.7" cy="26.7" r="2.9" fill="#05060a"/><circle cx="26.7" cy="26.5" r="2.1" fill="#3a0ec4"/><ellipse cx="26.7" cy="27.6" rx="1.5" ry=".9" fill="#9478d8"/></g><g transform="translate(294.0,822)"><defs><linearGradient id="gCone" x1="0" y1="0" x2="1" y2="0"><stop offset="0" stop-color="#7a8288"/><stop offset=".32" stop-color="#e6e8ea"/><stop offset=".6" stop-color="#b4b9bd"/><stop offset="1" stop-color="#566068"/></linearGradient><linearGradient id="gStem" x1="0" y1="0" x2="1" y2="0"><stop offset="0" stop-color="#3c444a"/><stop offset=".5" stop-color="#98a0a6"/><stop offset="1" stop-color="#4a5258"/></linearGradient></defs><ellipse cx="21" cy="30.6" rx="10" ry="2" fill="#e4e4e4"/><path d="M28.4 19.2 L32.8 18.6 L32.8 23.2 L27.6 24.4 Z" fill="#d2d2d2" opacity=".85"/><path d="M15.4 8 L32.6 8.4 L25.4 19.8 L22.4 19.8 Z" fill="url(#gCone)"/><rect x="22.4" y="19.4" width="2.9" height="7.2" fill="url(#gStem)"/><ellipse cx="23.85" cy="26.6" rx="1.45" ry=".6" fill="#2e363c"/><ellipse cx="24" cy="7.7" rx="8.7" ry="2.4" fill="#5e676f"/><ellipse cx="24.2" cy="7.9" rx="7.7" ry="1.7" fill="#d6dade"/><ellipse cx="20.8" cy="7.7" rx="3.8" ry="1" fill="#48525a" opacity=".75"/><path d="M17.6 9 Q24 10.6 31 8.8" stroke="#4a545c" stroke-width=".7" fill="none" opacity=".7"/><path d="M5.4 6.8 L15.8 7.8 L20.8 14.2 L5.6 9.2 Z" fill="#f7f7f7"/><path d="M5.6 9.2 L20.8 14.2 L20.8 32.2 L5.6 27.3 Z" fill="#e9e9e9" stroke="#dadada" stroke-width=".7"/><path d="M7.8 11.6 L19 15.2 L19 29.6 L7.8 26.2 Z" fill="#efefef"/><path d="M6.2 17 L7.4 17.3 L7.4 26.4 L6.2 26Z" fill="#9a9a9a"/><path d="M10.4 13.2 L13.6 14.8 L10.4 16.6 L13.8 18.2 L10.4 20 L13.8 21.6 L10.4 23.4 L13.2 25 L11 26.2" fill="none" stroke="#a2a2a2" stroke-width="1.1"/><path d="M17.4 15.4h1.6M17.4 17.8h1.6M17.4 20.2h1.6M17.4 22.6h1.6M17.4 25h1.6M17.4 27.2h1.6" stroke="#b0b0b0" stroke-width="1"/></g><g transform="translate(333,830)"><rect x="0.4" y="21.6" width="27.2" height="3.6" rx="1.5" fill="#fafafa"/><rect x="1.6" y="22.6" width="24.8" height="1.2" fill="#dedede"/><rect x="0" y="0" width="28" height="20.8" rx="1.8" fill="url(#gBoard)"/><rect x=".4" y=".4" width="27.2" height="20" rx="1.5" fill="none" stroke="#55683a" stroke-width=".6"/><path d="M9.4 5.2V4.2H2.8L6.4 10.4 2.6 16.6H9.6V15.4" fill="none" stroke="#fff" stroke-width="1.5" stroke-linejoin="miter"/><rect x="5.6" y="2.2" width="1.2" height="1" fill="#fff"/><rect x="3.6" y="17.8" width="2.6" height="1" fill="#e8e8e8"/><rect x="8.6" y="17.8" width="1.2" height="1.2" fill="#fff"/><rect x="11.6" y="10" width="14.6" height="1.1" fill="#fff"/><path d="M12.4 5.4l2 3M14.4 5.4l-2 3" stroke="#fff" stroke-width="1"/><rect x="15" y="7.6" width="1.4" height="1" fill="#ddd"/><path d="M19 6.4l-1.4 1 1.4 1z" fill="#fff"/><path d="M25 5.2h-2.2v1.6h2v1.8h-2.4" stroke="#fff" stroke-width="1" fill="none"/><path d="M17.6 12.6h2.6l-1.2 1.6q1.6.4 1.2 1.8-.6 1.2-2.6.6" stroke="#fff" stroke-width="1" fill="none"/></g><ellipse cx="385.2" cy="851.0" rx="9" ry="1.6" fill="#c4c7cb" opacity=".8"/><g transform="translate(382.8,834.0)"><path d="M6.29 -1.20 L6.29 1.20 L4.82 1.04 L4.14 2.67 L5.29 3.60 L3.60 5.29 L2.67 4.14 L1.04 4.82 L1.20 6.29 L-1.20 6.29 L-1.04 4.82 L-2.67 4.14 L-3.60 5.29 L-5.29 3.60 L-4.14 2.67 L-4.82 1.04 L-6.29 1.20 L-6.29 -1.20 L-4.82 -1.04 L-4.14 -2.67 L-5.29 -3.60 L-3.60 -5.29 L-2.67 -4.14 L-1.04 -4.82 L-1.20 -6.29 L1.20 -6.29 L1.04 -4.82 L2.67 -4.14 L3.60 -5.29 L5.29 -3.60 L4.14 -2.67 L4.82 -1.04Z" fill="#fff" stroke="#fff" stroke-width="1.6" stroke-linejoin="round" opacity=".7"/><path d="M6.29 -1.20 L6.29 1.20 L4.82 1.04 L4.14 2.67 L5.29 3.60 L3.60 5.29 L2.67 4.14 L1.04 4.82 L1.20 6.29 L-1.20 6.29 L-1.04 4.82 L-2.67 4.14 L-3.60 5.29 L-5.29 3.60 L-4.14 2.67 L-4.82 1.04 L-6.29 1.20 L-6.29 -1.20 L-4.82 -1.04 L-4.14 -2.67 L-5.29 -3.60 L-3.60 -5.29 L-2.67 -4.14 L-1.04 -4.82 L-1.20 -6.29 L1.20 -6.29 L1.04 -4.82 L2.67 -4.14 L3.60 -5.29 L5.29 -3.60 L4.14 -2.67 L4.82 -1.04Z" fill="url(#gGear)" stroke="#1f4a80" stroke-opacity=".55" stroke-width=".7" stroke-linejoin="round"/><ellipse rx="2.5" ry="3.4" fill="#0d2c58" opacity=".55" transform="translate(.5,-.3)"/><ellipse rx="1.95" ry="2.9" fill="#f4f6f8"/></g><g transform="translate(394.8,834.4)"><path d="M6.17 1.28 L5.27 3.46 L3.99 2.76 L2.76 3.99 L3.46 5.27 L1.28 6.17 L0.87 4.77 L-0.87 4.77 L-1.28 6.17 L-3.46 5.27 L-2.76 3.99 L-3.99 2.76 L-5.27 3.46 L-6.17 1.28 L-4.77 0.87 L-4.77 -0.87 L-6.17 -1.28 L-5.27 -3.46 L-3.99 -2.76 L-2.76 -3.99 L-3.46 -5.27 L-1.28 -6.17 L-0.87 -4.77 L0.87 -4.77 L1.28 -6.17 L3.46 -5.27 L2.76 -3.99 L3.99 -2.76 L5.27 -3.46 L6.17 -1.28 L4.77 -0.87 L4.77 0.87Z" fill="#fff" stroke="#fff" stroke-width="1.6" stroke-linejoin="round" opacity=".7"/><path d="M6.17 1.28 L5.27 3.46 L3.99 2.76 L2.76 3.99 L3.46 5.27 L1.28 6.17 L0.87 4.77 L-0.87 4.77 L-1.28 6.17 L-3.46 5.27 L-2.76 3.99 L-3.99 2.76 L-5.27 3.46 L-6.17 1.28 L-4.77 0.87 L-4.77 -0.87 L-6.17 -1.28 L-5.27 -3.46 L-3.99 -2.76 L-2.76 -3.99 L-3.46 -5.27 L-1.28 -6.17 L-0.87 -4.77 L0.87 -4.77 L1.28 -6.17 L3.46 -5.27 L2.76 -3.99 L3.99 -2.76 L5.27 -3.46 L6.17 -1.28 L4.77 -0.87 L4.77 0.87Z" fill="url(#gGear)" stroke="#1f4a80" stroke-opacity=".55" stroke-width=".7" stroke-linejoin="round"/><ellipse rx="2.5" ry="3.4" fill="#0d2c58" opacity=".55" transform="translate(.5,-.3)"/><ellipse rx="1.95" ry="2.9" fill="#f4f6f8"/></g><g transform="translate(384.9,847.3000000000001)"><path d="M6.27 1.30 L5.35 3.51 L4.05 2.80 L2.80 4.05 L3.51 5.35 L1.30 6.27 L0.89 4.85 L-0.89 4.85 L-1.30 6.27 L-3.51 5.35 L-2.80 4.05 L-4.05 2.80 L-5.35 3.51 L-6.27 1.30 L-4.85 0.89 L-4.85 -0.89 L-6.27 -1.30 L-5.35 -3.51 L-4.05 -2.80 L-2.80 -4.05 L-3.51 -5.35 L-1.30 -6.27 L-0.89 -4.85 L0.89 -4.85 L1.30 -6.27 L3.51 -5.35 L2.80 -4.05 L4.05 -2.80 L5.35 -3.51 L6.27 -1.30 L4.85 -0.89 L4.85 0.89Z" fill="#fff" stroke="#fff" stroke-width="1.6" stroke-linejoin="round" opacity=".7"/><path d="M6.27 1.30 L5.35 3.51 L4.05 2.80 L2.80 4.05 L3.51 5.35 L1.30 6.27 L0.89 4.85 L-0.89 4.85 L-1.30 6.27 L-3.51 5.35 L-2.80 4.05 L-4.05 2.80 L-5.35 3.51 L-6.27 1.30 L-4.85 0.89 L-4.85 -0.89 L-6.27 -1.30 L-5.35 -3.51 L-4.05 -2.80 L-2.80 -4.05 L-3.51 -5.35 L-1.30 -6.27 L-0.89 -4.85 L0.89 -4.85 L1.30 -6.27 L3.51 -5.35 L2.80 -4.05 L4.05 -2.80 L5.35 -3.51 L6.27 -1.30 L4.85 -0.89 L4.85 0.89Z" fill="url(#gGear)" stroke="#1f4a80" stroke-opacity=".55" stroke-width=".7" stroke-linejoin="round"/><ellipse rx="2.5" ry="3.4" fill="#0d2c58" opacity=".55" transform="translate(.5,-.3)"/><ellipse rx="1.95" ry="2.9" fill="#f4f6f8"/></g><g transform="translate(398.2,847.7)"><path d="M6.19 -1.18 L6.19 1.18 L4.74 1.02 L4.08 2.63 L5.21 3.54 L3.54 5.21 L2.63 4.08 L1.02 4.74 L1.18 6.19 L-1.18 6.19 L-1.02 4.74 L-2.63 4.08 L-3.54 5.21 L-5.21 3.54 L-4.08 2.63 L-4.74 1.02 L-6.19 1.18 L-6.19 -1.18 L-4.74 -1.02 L-4.08 -2.63 L-5.21 -3.54 L-3.54 -5.21 L-2.63 -4.08 L-1.02 -4.74 L-1.18 -6.19 L1.18 -6.19 L1.02 -4.74 L2.63 -4.08 L3.54 -5.21 L5.21 -3.54 L4.08 -2.63 L4.74 -1.02Z" fill="#fff" stroke="#fff" stroke-width="1.6" stroke-linejoin="round" opacity=".7"/><path d="M6.19 -1.18 L6.19 1.18 L4.74 1.02 L4.08 2.63 L5.21 3.54 L3.54 5.21 L2.63 4.08 L1.02 4.74 L1.18 6.19 L-1.18 6.19 L-1.02 4.74 L-2.63 4.08 L-3.54 5.21 L-5.21 3.54 L-4.08 2.63 L-4.74 1.02 L-6.19 1.18 L-6.19 -1.18 L-4.74 -1.02 L-4.08 -2.63 L-5.21 -3.54 L-3.54 -5.21 L-2.63 -4.08 L-1.02 -4.74 L-1.18 -6.19 L1.18 -6.19 L1.02 -4.74 L2.63 -4.08 L3.54 -5.21 L5.21 -3.54 L4.08 -2.63 L4.74 -1.02Z" fill="url(#gGear)" stroke="#1f4a80" stroke-opacity=".55" stroke-width=".7" stroke-linejoin="round"/><ellipse rx="2.5" ry="3.4" fill="#0d2c58" opacity=".55" transform="translate(.5,-.3)"/><ellipse rx="1.95" ry="2.9" fill="#f4f6f8"/></g><g transform="translate(419.8,827)"><path d="M0.8 2 Q0.6 0.4 2.2 0.6 L21.6 3.6 Q23.4 4 23.4 5.8 L23.4 19 L1.6 17.4 Z" fill="#dfe5ea" stroke="#9cb2c6" stroke-width="1"/><path d="M1.6 4.2 L22.6 7.2" stroke="#a9c6dc" stroke-width="1.6"/><path d="M2.4 6.4 L22 9.2 L22 18 L2.6 16.6Z" fill="#e8eaec"/><rect x="15" y="5.2" width="1.8" height="1.6" fill="#4a8fd6" transform="skewY(8) translate(0,-2.2)"/><rect x="17.6" y="5.2" width="1.8" height="1.6" fill="#4a8fd6" transform="skewY(8) translate(0,-2.2)"/><rect x="20.2" y="5.2" width="1.8" height="1.6" fill="#4a8fd6" transform="skewY(8) translate(0,-2.2)"/><ellipse cx="18.9" cy="27.1" rx="8" ry="1.4" fill="#cfcfcf" opacity=".7"/><circle cx="17.9" cy="19.7" r="8.3" fill="#d8d8d8"/><path d="M17.9 19.7 L14.299999999999999 12.899999999999999 A7.7 7.7 0 0 1 25.599999999999998 19.7Z" fill="#2fb9f2"/><path d="M17.9 19.7 L25.599999999999998 19.7 A7.7 7.7 0 0 1 17.9 27.4Z" fill="#e61212"/><path d="M17.9 19.7 L17.9 27.4 A7.7 7.7 0 0 1 11.2 15.85Z" fill="#007a00"/><path d="M17.9 19.7 L11.2 15.85 A7.7 7.7 0 0 1 14.299999999999999 12.899999999999999Z" fill="#6cc06c"/><path d="M10.7 22.3 A7.7 7.7 0 0 0 16.9 27.299999999999997 Q12.899999999999999 24.7 10.7 22.3Z" fill="#004a00" opacity=".5"/></g><rect x="460.5" y="826.5" width="31" height="30" fill="#ececec" stroke="#a4a4a4" stroke-width="1"/><g transform="translate(464,829)"><rect x="0" y="0" width="24" height="23" rx="2.4" fill="#14294b"/><path d="M10.6 2.4 H20.6 L23.4 5 V8.4 H10.6 Q7.6 8.4 7.6 5.4 Q7.6 2.4 10.6 2.4Z" fill="#2db26a"/><rect x="13" y="3.6" width="3.6" height="0.9" fill="#d8f4e4"/><rect x="13.6" y="5" width="3" height="2.2" fill="#c8f0da"/><rect x="15" y="5.6" width="1.6" height="1.6" fill="#fff"/><text x="1.6" y="15.6" font-family="Liberation Sans" font-weight="bold" font-size="8.6" fill="#fff" textLength="18.2" lengthAdjust="spacingAndGlyphs">KSeF</text><g transform="translate(18.4,19.4)"><path d="M4.18 0.99 L3.67 2.24 L2.59 1.87 L1.89 2.58 L2.26 3.66 L1.02 4.18 L0.51 3.16 L-0.49 3.16 L-0.99 4.18 L-2.24 3.67 L-1.87 2.59 L-2.58 1.89 L-3.66 2.26 L-4.18 1.02 L-3.16 0.51 L-3.16 -0.49 L-4.18 -0.99 L-3.67 -2.24 L-2.59 -1.87 L-1.89 -2.58 L-2.26 -3.66 L-1.02 -4.18 L-0.51 -3.16 L0.49 -3.16 L0.99 -4.18 L2.24 -3.67 L1.87 -2.59 L2.58 -1.89 L3.66 -2.26 L4.18 -1.02 L3.16 -0.51 L3.16 0.49Z" fill="#fff"/><circle r="2.1" fill="#14294b"/><circle r="1" fill="#2a4a80"/></g></g><text x="512" y="845" font-family="Liberation Serif" font-style="italic" font-size="15.5">f</text><text x="517.4" y="847" font-family="Liberation Serif" font-style="italic" font-size="10">x</text><g transform="translate(1311,827.6)"><path d="M19.6 22.4 L25 20.6 L22 25Z" fill="#bdbdbd"/><path d="M0.4 1.2 Q0.4 0 1.6 0.2 L20.4 3.6 Q21.8 4 21.8 5.4 L21.8 25.4 Q21.8 26.6 20.4 26.4 L1.6 22.8 Q0.4 22.6 0.4 21.4 Z" fill="#2e2e2e"/><path d="M1.8 2 L20.4 5.2 L20.4 24.6 L1.8 21.2 Z" fill="#dcdcdc"/><path d="M2.8 4 L7.9 4.8 L7.9 22.2 L2.8 21.2Z" fill="#c80a0a"/><path d="M8.8 13.6 Q11.4 13.2 13.9 14.6 L13.9 23.4 L8.8 22.4Z" fill="#1f66c8"/><path d="M15 10.8 L19.8 11.6 L19.8 24.4 L15 23.6Z" fill="#16961e"/><path d="M1 22.4 L20.8 26" stroke="#6e6e6e" stroke-width=".8"/></g><g transform="translate(1350,822)"><path d="M4.8 12.8 L13.2 5 L14 6.4 L8.4 12.6Z" fill="#fff"/><path d="M8.1 12.4 L13.7 6.2 L26.7 5 L26.7 31.9 L8.1 28.6 Z" fill="#fff" stroke="#fff" stroke-width="2.4" stroke-linejoin="round" opacity=".8"/><path d="M8.1 12.4 L13.7 6.2 L26.7 5 L26.7 31.9 L8.1 28.6 Z" fill="#f4faff" stroke="#6fc0f8" stroke-width="1.1" stroke-linejoin="round"/><path d="M26.5 5.4 L26.5 31.6" stroke="#7aa6d2" stroke-width="1"/><path d="M10 13 L13.8 9.2 L24.4 8.4 L24.4 29.2 L10 26.8 Z" fill="#a9d5f8"/><path d="M12.8 11.4 L9 13.4 L11.4 15.4Z" fill="#8cc4f0" opacity=".8"/><defs><linearGradient id="gShH" x1="0" y1="0" x2="1" y2="0"><stop offset="0" stop-color="#58aef2"/><stop offset="1" stop-color="#168af0"/></linearGradient></defs><path d="M13.7 9.4 L24 8.7 L24 11.7 L13.7 12.3Z" fill="url(#gShH)"/><rect x="13.3" y="12.9" width="1.7" height="1.7" rx=".7" fill="#c6e05a"/><rect x="15.9" y="13" width="3.4" height="1.6" rx=".7" fill="#ffffff"/><rect x="21" y="12.8" width="2" height="1.7" rx=".7" fill="#ffffff"/><rect x="12.8" y="15.8" width="1.8" height="1.6" rx=".7" fill="#ffffff"/><rect x="15.3" y="15.6" width="4.2" height="1.9" rx=".7" fill="#f6f81e"/><rect x="21" y="15.6" width="2" height="1.7" rx=".7" fill="#ffffff"/><rect x="11.8" y="18.7" width="2.8" height="1.7" rx=".7" fill="#ffffff"/><rect x="15.3" y="18.6" width="4.2" height="2.1" rx=".7" fill="#f0f428"/><rect x="20.4" y="18.2" width="2.7" height="2.8" rx=".7" fill="#f04010"/><rect x="11.8" y="21.8" width="2.8" height="1.7" rx=".7" fill="#ffffff"/><rect x="15.3" y="21.8" width="4.4" height="2.2" rx=".7" fill="#f04818"/><rect x="20.9" y="22" width="2.2" height="1.9" rx=".7" fill="#ffffff"/><rect x="11.1" y="24.3" width="3.5" height="2.2" rx=".7" fill="#eef020"/><rect x="15.9" y="24.9" width="3.4" height="1.6" rx=".7" fill="#ffffff"/><rect x="20.9" y="25.3" width="2.2" height="1.6" rx=".7" fill="#ffffff"/></g><g transform="translate(1401.6,827.2)"><path d="M0.2 1.4 Q0.2 0 1.8 0.2 L17.6 2.8 L21.6 6.4 L21.6 25.8 Q21.6 27.2 20.2 26.9 L1.6 22.8 Q0.2 22.4 0.2 21 Z" fill="#111"/><path d="M1.4 2 L4.2 2.4 L4.2 8 L1.4 7.6Z" fill="#555"/><path d="M4.4 1.6 L14.6 3.4 L14.6 9 L4.4 7.4 Z" fill="#bcbcbc"/><path d="M11.4 3.4 L13.6 3.8 L13.6 8.4 L11.4 8 Z" fill="#6e6e6e"/><path d="M3 9.4 L17.6 12 L17.6 24.4 L3 21.2 Z" fill="url(#gLabel)"/><path d="M5.4 17.6h1M8.4 18.4h2.4M13 19.6h1" stroke="#b8c0e0" stroke-width=".7"/><path d="M4 20.2 L17 23" stroke="#c4c4c4" stroke-width=".6"/></g><g transform="translate(1443,828.6)"><path d="M4 19 L26 21 L18 24 L2 21Z" fill="#f8f8f8" opacity=".9"/><path d="M7.4 2.0 Q7.4 0.4 9.0 0.6000000000000001 L24.799999999999997 3.1999999999999997 Q26.200000000000003 3.6 26.200000000000003 5.0 L26.200000000000003 18.799999999999997 L24.0 19.0 L7.800000000000001 15.8 Z" fill="url(#gWin)" stroke="#82a6be" stroke-width="1"/><path d="M8.0 3.8 L25.6 6.800000000000001" stroke="#9cc0d6" stroke-width="1.8"/><path d="M8.200000000000001 1.7999999999999998 L25.4 4.6000000000000005" stroke="#d8e8f0" stroke-width="1.2"/><path d="M18.8 4.3 L23.0 5.0" stroke="#3f8fd8" stroke-width="1.4"/><path d="M0.4 7.199999999999999 Q0.4 5.6 2.0 5.8 L17.799999999999997 8.399999999999999 Q19.2 8.8 19.2 10.2 L19.2 24.0 L17.0 24.200000000000003 L0.8 21.0 Z" fill="url(#gWin)" stroke="#82a6be" stroke-width="1"/><path d="M1.0 9.0 L18.599999999999998 12.0" stroke="#9cc0d6" stroke-width="1.8"/><path d="M1.2000000000000002 7.0 L18.4 9.8" stroke="#d8e8f0" stroke-width="1.2"/><path d="M11.8 9.5 L16.0 10.2" stroke="#3f8fd8" stroke-width="1.4"/></g><g transform="translate(1499,840.9)"><circle r="14.0" fill="#fff" opacity=".55"/><circle r="13.1" fill="#d6d6d6"/><circle r="12.4" fill="#a4a4a4"/><circle r="11.6" fill="#d0d0d0"/><circle r="11.0" fill="#a8a8a8"/><circle r="10.55" fill="url(#gGreen)"/><path d="M-10.4 1.5 A10.55 10.55 0 0 0 2 10.35 Q-5 6 -10.4 1.5Z" fill="#006a00" opacity=".6"/><path d="M-3.2 -0.6 Q-1 -2.8 3 -2.2 Q0.5 -0.2 -1.4 1.6 Q1 2.4 2.6 1 Q0.5 3.4 -2.6 2.6Z" fill="#005a00" opacity=".7"/><path d="M-10.2 -2.6 A10.55 10.55 0 0 1 10.2 -2.6 Q0 -6.5 -10.2 -2.6Z" fill="#fff" opacity=".18"/><path d="M0.2 -7.8 Q6.8 -7.6 7.6 -1.4 L10 -1.6 L5.6 5 L1.2 -0.8 L3.8 -1 Q3.4 -4 -0.4 -4.2Z" fill="url(#gWhiteG)"/><path d="M-0.4 7.9 Q-7 7.6 -7.6 1.6 L-10 1.8 L-5.8 -5 L-1.2 0.8 L-3.8 1 Q-3.6 4.2 0.2 4.4Z" fill="url(#gWhiteG)"/></g><g transform="translate(1542.3,840.9)"><circle r="14.0" fill="#fff" opacity=".55"/><circle r="13.1" fill="#d6d6d6"/><circle r="12.4" fill="#a4a4a4"/><circle r="11.6" fill="#d0d0d0"/><circle r="11.0" fill="#a8a8a8"/><circle r="10.55" fill="url(#gBlueB)"/><path d="M-10.45 1.5 Q-5 -0.4 0.2 -3.9 Q5 -4.4 10.3 -2.4 A10.55 10.55 0 0 0 -10.45 1.5Z" fill="url(#gBlueT)"/><path d="M-10.45 1.5 Q-5 -0.4 0.2 -3.9" fill="none" stroke="#86a6e8" stroke-width=".5" opacity=".7"/><rect x="-4.5" y="-5" width="2.9" height="10" fill="url(#gWhiteV)"/><path d="M-1.6 0L4.6 -5V5Z" fill="url(#gWhiteV)"/></g><g transform="translate(1576.1,840.9)"><circle r="14.0" fill="#fff" opacity=".55"/><circle r="13.1" fill="#d6d6d6"/><circle r="12.4" fill="#a4a4a4"/><circle r="11.6" fill="#d0d0d0"/><circle r="11.0" fill="#a8a8a8"/><circle r="10.55" fill="url(#gBlueB)"/><path d="M-10.45 1.5 Q-5 -0.4 0.2 -3.9 Q5 -4.4 10.3 -2.4 A10.55 10.55 0 0 0 -10.45 1.5Z" fill="url(#gBlueT)"/><path d="M-10.45 1.5 Q-5 -0.4 0.2 -3.9" fill="none" stroke="#86a6e8" stroke-width=".5" opacity=".7"/><rect x="1.9" y="-5" width="2.9" height="10" fill="url(#gWhiteV)"/><path d="M1.9 0L-4.3 -5V5Z" fill="url(#gWhiteV)"/></g></svg>
<div class="a" style="left:254px;top:116px;width:1051px;height:325px;background:#b9d1ea;"></div>
<div class="a" style="left:254px;top:116px;width:1051px;height:30px;background:linear-gradient(#98b3d2,#a3bddb 40%,#b2cae5 75%,#bcd3eb);"></div>
<div class="a" style="left:254px;top:116px;width:1px;height:325px;background:#f4f8fc;"></div>
<div class="a" style="left:255px;top:116px;width:1px;height:325px;background:#222;"></div>
<div class="a" style="left:256px;top:116px;width:1px;height:325px;background:#f4f8fc;"></div>
<div class="a" style="left:1303px;top:116px;width:1px;height:325px;background:#86d9f3;"></div>
<div class="a" style="left:1304px;top:116px;width:1px;height:325px;background:#111;"></div>
<div class="a" style="left:1298px;top:146px;width:5px;height:89px;background:linear-gradient(#bcd3eb,#d9e5f3);"></div>
<div class="a" style="left:258px;top:146px;width:5px;height:89px;background:linear-gradient(#bcd3eb,#d9e5f3);"></div>
<svg width="1600" height="869"><g transform="translate(265,125)"><rect x="0" y="0" width="8" height="8" fill="#fbb565"/><rect x="8" y="0" width="8" height="4.4" fill="#639bdb"/><rect x="0" y="8" width="4.2" height="8" fill="#6fcf6f"/><path d="M4.2 16V6.4Q4.2 4.2 6.4 4.2H16V16Z" fill="#fff"/><defs><linearGradient id="gAppR" x1="0" y1="0" x2=".5" y2="1"><stop offset="0" stop-color="#f08a8a"/><stop offset=".35" stop-color="#dc1c1c"/><stop offset=".75" stop-color="#b01010"/><stop offset="1" stop-color="#2a0404"/></linearGradient></defs><rect x="8" y="8" width="8" height="8" fill="url(#gAppR)"/></g></svg>
<div class="t w" style="left:285px;top:127px;transform:scaleX(0.8246);transform-origin:0 0;">KSeF</div>
<div class="t w" style="left:313px;top:127px;transform:scaleX(0.9952);transform-origin:0 0;">historia</div>
<div class="t w" style="left:355px;top:127px;transform:scaleX(1.0375);transform-origin:0 0;">dokumentu</div>
<div class="a" style="left:1195px;top:124px;width:32px;height:18px;box-sizing:border-box;border:1px solid #8ea7c6;border-radius:3px;background:#8ea7c6;overflow:hidden;"><div class="a" style="left:0;top:0;width:30px;height:8px;background:linear-gradient(#b9cde5,#afc6e0);"></div><div class="a" style="left:0;top:8px;width:30px;height:8px;background:linear-gradient(#9fb9d7,#a6bfdb 55%,#b4cbe5);"></div><div class="a" style="left:0;top:0;width:28px;height:14px;border:1px solid rgba(255,255,255,.45);border-radius:2px;"></div></div>
<div class="a" style="left:1229px;top:124px;width:32px;height:18px;box-sizing:border-box;border:1px solid #5d7596;border-radius:3px;background:#5d7596;overflow:hidden;"><div class="a" style="left:0;top:0;width:30px;height:8px;background:linear-gradient(#c4d6ea,#b9cde4);"></div><div class="a" style="left:0;top:8px;width:30px;height:8px;background:linear-gradient(#9ab5d3,#a3bcd9 55%,#b9cfe7);"></div><div class="a" style="left:0;top:0;width:28px;height:14px;border:1px solid rgba(255,255,255,.45);border-radius:2px;"></div></div>
<div class="a" style="left:1263px;top:124px;width:32px;height:18px;box-sizing:border-box;border:1px solid #5b1626;border-radius:3px;background:#5b1626;overflow:hidden;"><div class="a" style="left:0;top:0;width:30px;height:8px;background:linear-gradient(#eab2a3,#dc8e7c);"></div><div class="a" style="left:0;top:8px;width:30px;height:8px;background:linear-gradient(#bf3d25,#c84e34 55%,#d98069);"></div><div class="a" style="left:0;top:0;width:28px;height:14px;border:1px solid rgba(255,255,255,.45);border-radius:2px;"></div></div>
<svg width="1600" height="869"><rect x="1205.5" y="132.5" width="10" height="4" rx="1" fill="#dcdcdc" stroke="#7a7470" stroke-width="1"/><rect x="1239.5" y="128.5" width="10" height="8" rx="1" fill="#f6f6f4" stroke="#4a5568" stroke-width="1"/><rect x="1242.5" y="131.5" width="4" height="2" fill="#a9c0dc" stroke="#4a5a78" stroke-width="1"/><path d="M1272.9 128.8h3.8l1.8 2.3 1.8-2.3h3.8l-3.8 4.2 3.8 4.2h-3.8l-1.8-2.3-1.8 2.3h-3.8l3.8-4.2z" fill="#fdfdfd" stroke="#4a4e64" stroke-width="1" stroke-linejoin="round"/></svg>
<div class="a" style="left:263px;top:145px;width:1034px;height:290px;background:#f3f5f8;"></div>
<div class="a" style="left:264px;top:146px;width:1032px;height:248px;background:#a9abb3;"></div>
<div class="a" style="left:265px;top:147px;width:1030px;height:246px;background:#fff;"></div>
<div class="a" style="left:265px;top:147px;width:9px;height:229px;background:#efefef;"></div>
<div class="a" style="left:265px;top:147px;width:1px;height:229px;background:#fff;"></div>
<div class="a" style="left:265px;top:147px;width:9px;height:1px;background:#fff;"></div>
<div class="a" style="left:273px;top:147px;width:1px;height:229px;background:#c4c4c4;"></div>
<div class="a" style="left:274px;top:147px;width:1px;height:229px;background:#000;"></div>
<div class="a" style="left:275px;top:190px;width:1002px;height:1px;background:#c0c0c0;"></div>
<div class="a" style="left:266px;top:190px;width:8px;height:1px;background:#000;"></div>
<div class="a" style="left:266px;top:191px;width:7px;height:1px;background:#fff;"></div>
<div class="a" style="left:275px;top:209px;width:1002px;height:1px;background:#c0c0c0;"></div>
<div class="a" style="left:266px;top:209px;width:8px;height:1px;background:#000;"></div>
<div class="a" style="left:266px;top:210px;width:7px;height:1px;background:#fff;"></div>
<div class="a" style="left:275px;top:228px;width:1002px;height:1px;background:#c0c0c0;"></div>
<div class="a" style="left:266px;top:228px;width:8px;height:1px;background:#000;"></div>
<div class="a" style="left:266px;top:229px;width:7px;height:1px;background:#fff;"></div>
<div class="a" style="left:275px;top:247px;width:1002px;height:1px;background:#c0c0c0;"></div>
<div class="a" style="left:266px;top:247px;width:8px;height:1px;background:#000;"></div>
<div class="a" style="left:266px;top:248px;width:7px;height:1px;background:#fff;"></div>
<div class="a" style="left:275px;top:266px;width:1002px;height:1px;background:#c0c0c0;"></div>
<div class="a" style="left:266px;top:266px;width:8px;height:1px;background:#000;"></div>
<div class="a" style="left:266px;top:267px;width:7px;height:1px;background:#fff;"></div>
<div class="a" style="left:275px;top:285px;width:1002px;height:1px;background:#c0c0c0;"></div>
<div class="a" style="left:266px;top:285px;width:8px;height:1px;background:#000;"></div>
<div class="a" style="left:266px;top:286px;width:7px;height:1px;background:#fff;"></div>
<div class="a" style="left:275px;top:304px;width:1002px;height:1px;background:#c0c0c0;"></div>
<div class="a" style="left:266px;top:304px;width:8px;height:1px;background:#000;"></div>
<div class="a" style="left:266px;top:305px;width:7px;height:1px;background:#fff;"></div>
<div class="a" style="left:275px;top:323px;width:1002px;height:1px;background:#c0c0c0;"></div>
<div class="a" style="left:266px;top:323px;width:8px;height:1px;background:#000;"></div>
<div class="a" style="left:266px;top:324px;width:7px;height:1px;background:#fff;"></div>
<div class="a" style="left:275px;top:342px;width:1002px;height:1px;background:#c0c0c0;"></div>
<div class="a" style="left:266px;top:342px;width:8px;height:1px;background:#000;"></div>
<div class="a" style="left:266px;top:343px;width:7px;height:1px;background:#fff;"></div>
<div class="a" style="left:275px;top:361px;width:1002px;height:1px;background:#c0c0c0;"></div>
<div class="a" style="left:266px;top:361px;width:8px;height:1px;background:#000;"></div>
<div class="a" style="left:266px;top:362px;width:7px;height:1px;background:#fff;"></div>
<div class="a" style="left:1277px;top:147px;width:1px;height:229px;background:#fff;"></div>
<div class="a" style="left:293px;top:147px;width:1px;height:24px;background:#e4e4e4;"></div>
<div class="a" style="left:293px;top:172px;width:1px;height:204px;background:#c0c0c0;"></div>
<div class="a" style="left:414px;top:147px;width:1px;height:24px;background:#e4e4e4;"></div>
<div class="a" style="left:414px;top:172px;width:1px;height:204px;background:#c0c0c0;"></div>
<div class="a" style="left:501px;top:147px;width:1px;height:24px;background:#e4e4e4;"></div>
<div class="a" style="left:501px;top:172px;width:1px;height:204px;background:#c0c0c0;"></div>
<div class="a" style="left:728px;top:147px;width:1px;height:24px;background:#e4e4e4;"></div>
<div class="a" style="left:728px;top:172px;width:1px;height:204px;background:#c0c0c0;"></div>
<div class="a" style="left:852px;top:147px;width:1px;height:24px;background:#e4e4e4;"></div>
<div class="a" style="left:852px;top:172px;width:1px;height:204px;background:#c0c0c0;"></div>
<div class="a" style="left:1109px;top:147px;width:1px;height:24px;background:#e4e4e4;"></div>
<div class="a" style="left:1109px;top:172px;width:1px;height:204px;background:#c0c0c0;"></div>
<div class="a" style="left:1195px;top:147px;width:1px;height:24px;background:#e4e4e4;"></div>
<div class="a" style="left:1195px;top:172px;width:1px;height:204px;background:#c0c0c0;"></div>
<div class="a" style="left:1271px;top:147px;width:1px;height:24px;background:#e4e4e4;"></div>
<div class="a" style="left:1271px;top:172px;width:1px;height:204px;background:#c0c0c0;"></div>
<div class="a" style="left:1272px;top:147px;width:5px;height:24px;background:#f0f0f0;"></div>
<div class="a" style="left:265px;top:171px;width:1012px;height:1px;background:#000;"></div>
<div class="a" style="left:275px;top:172px;width:1002px;height:18px;background:#a6d0f2;"></div>
<div class="a" style="left:275px;top:190px;width:1002px;height:1px;background:#0078d7;"></div>
<div class="a" style="left:1276px;top:172px;width:1px;height:19px;background:#0078d7;"></div>
<div class="a" style="left:414px;top:172px;width:1px;height:18px;background:#b0b8c0;"></div>
<div class="a" style="left:501px;top:172px;width:1px;height:18px;background:#b0b8c0;"></div>
<div class="a" style="left:728px;top:172px;width:1px;height:18px;background:#b0b8c0;"></div>
<div class="a" style="left:852px;top:172px;width:1px;height:18px;background:#b0b8c0;"></div>
<div class="a" style="left:1109px;top:172px;width:1px;height:18px;background:#b0b8c0;"></div>
<div class="a" style="left:1195px;top:172px;width:1px;height:18px;background:#b0b8c0;"></div>
<div class="a" style="left:1271px;top:172px;width:1px;height:18px;background:#b0b8c0;"></div>
<div class="a" style="left:275px;top:172px;width:19px;height:19px;background:transparent;box-sizing:border-box;border:1px solid #0078d7;border-top-color:#000;"></div>
<div class="a" style="left:1278px;top:148px;width:16px;height:228px;background:#f0f0f0;"></div>
<div class="a" style="left:265px;top:376px;width:1030px;height:17px;background:#fff;"></div>
<div class="a" style="left:265px;top:377px;width:1013px;height:15px;background:#f0f0f0;"></div>
<div class="a" style="left:266px;top:376px;width:4px;height:17px;background:#000;"></div>
<div class="a" style="left:264px;top:394px;width:1032px;height:39px;background:#d9d9d9;"></div>
<div class="a" style="left:265px;top:394px;width:1030px;height:38px;background:#f0f0f0;"></div>
<div class="t h" style="left:294px;top:148px;letter-spacing:0.08px;">Nr dokumentu</div>
<div class="t h" style="left:415px;top:148px;letter-spacing:0.34px;">Data</div>
<div class="t h" style="left:502px;top:148px;letter-spacing:0.09px;">Kto wykonał</div>
<div class="t h" style="left:729px;top:148px;letter-spacing:0.42px;">Środowisko</div>
<div class="t h" style="left:853px;top:148px;letter-spacing:0.00px;">Stan</div>
<div class="t h" style="left:1110px;top:148px;letter-spacing:0.40px;">Było</div>
<div class="t h" style="left:1196px;top:148px;letter-spacing:0.47px;">Jest</div>
<div class="a" style="left:276px;top:175px;width:13px;height:13px;box-sizing:border-box;border:1px solid #333;background:#fff;"></div>
<div class="t d" style="left:296px;top:174px;letter-spacing:0.23px;">F /XF2/26/000013</div>
<div class="t d" style="left:417px;top:174px;letter-spacing:-0.34px;">09.01.2026</div>
<div class="t d" style="left:504px;top:174px;letter-spacing:0.13px;">Administrator systemu</div>
<div class="t d" style="left:731px;top:174px;letter-spacing:0.67px;">Testowe</div>
<div class="t d" style="left:855px;top:174px;letter-spacing:0.27px;">Pobranie UPO</div>
<div class="a" style="left:276px;top:194px;width:13px;height:13px;box-sizing:border-box;border:1px solid #333;background:#fff;"></div>
<div class="t d" style="left:296px;top:193px;letter-spacing:0.23px;">F /XF2/26/000013</div>
<div class="t d" style="left:417px;top:193px;letter-spacing:-0.34px;">09.01.2026</div>
<div class="t d" style="left:504px;top:193px;letter-spacing:0.13px;">Administrator systemu</div>
<div class="t d" style="left:731px;top:193px;letter-spacing:0.67px;">Testowe</div>
<div class="t d" style="left:855px;top:193px;letter-spacing:0.16px;">Pobranie statusu</div>
<div class="a" style="left:276px;top:213px;width:13px;height:13px;box-sizing:border-box;border:1px solid #333;background:#fff;"></div>
<div class="t d" style="left:296px;top:212px;letter-spacing:0.23px;">F /XF2/26/000013</div>
<div class="t d" style="left:417px;top:212px;letter-spacing:-0.34px;">09.01.2026</div>
<div class="t d" style="left:504px;top:212px;letter-spacing:0.13px;">Administrator systemu</div>
<div class="t d" style="left:731px;top:212px;letter-spacing:0.67px;">Testowe</div>
<div class="t d" style="left:855px;top:212px;letter-spacing:0.79px;">Wysyłka</div>
<div class="a" style="left:276px;top:232px;width:13px;height:13px;box-sizing:border-box;border:1px solid #333;background:#fff;"></div>
<div class="t d" style="left:296px;top:231px;letter-spacing:0.23px;">F /XF2/26/000013</div>
<div class="t d" style="left:417px;top:231px;letter-spacing:-0.34px;">09.01.2026</div>
<div class="t d" style="left:504px;top:231px;">r1</div>
<div class="t d" style="left:855px;top:231px;letter-spacing:0.40px;">Walidacja XML</div>
<div class="a" style="left:276px;top:251px;width:13px;height:13px;box-sizing:border-box;border:1px solid #333;background:#fff;"></div>
<div class="t d" style="left:296px;top:250px;letter-spacing:0.23px;">F /XF2/26/000013</div>
<div class="t d" style="left:417px;top:250px;letter-spacing:-0.34px;">09.01.2026</div>
<div class="t d" style="left:504px;top:250px;">r1</div>
<div class="t d" style="left:855px;top:250px;letter-spacing:0.11px;">Generowanie XML</div>
<div class="t d" style="left:1112px;top:250px;letter-spacing:0.64px;">Dane</div>
<div class="t d" style="left:1198px;top:250px;letter-spacing:0.64px;">Dane</div>
<div class="a" style="left:276px;top:270px;width:13px;height:13px;box-sizing:border-box;border:1px solid #333;background:#fff;"></div>
<div class="t d" style="left:296px;top:269px;letter-spacing:0.23px;">F /XF2/26/000013</div>
<div class="t d" style="left:417px;top:269px;letter-spacing:-0.34px;">09.01.2026</div>
<div class="t d" style="left:504px;top:269px;">r1</div>
<div class="t d" style="left:855px;top:269px;letter-spacing:0.55px;">Akceptacja</div>
<div class="a" style="left:276px;top:289px;width:13px;height:13px;box-sizing:border-box;border:1px solid #333;background:#fff;"></div>
<div class="t d" style="left:296px;top:288px;letter-spacing:0.23px;">F /XF2/26/000013</div>
<div class="t d" style="left:417px;top:288px;letter-spacing:-0.34px;">09.01.2026</div>
<div class="t d" style="left:504px;top:288px;">r1</div>
<div class="t d" style="left:855px;top:288px;letter-spacing:0.41px;">Wycofanie akceptacji</div>
<div class="t d" style="left:1112px;top:288px;letter-spacing:0.64px;">Dane</div>
<div class="t d" style="left:1198px;top:288px;letter-spacing:0.64px;">Dane</div>
<div class="a" style="left:276px;top:308px;width:13px;height:13px;box-sizing:border-box;border:1px solid #333;background:#fff;"></div>
<div class="t d" style="left:296px;top:307px;letter-spacing:0.23px;">F /XF2/26/000013</div>
<div class="t d" style="left:417px;top:307px;letter-spacing:-0.34px;">09.01.2026</div>
<div class="t d" style="left:504px;top:307px;letter-spacing:0.13px;">Administrator systemu</div>
<div class="t d" style="left:855px;top:307px;letter-spacing:0.40px;">Walidacja XML</div>
<div class="a" style="left:276px;top:327px;width:13px;height:13px;box-sizing:border-box;border:1px solid #333;background:#fff;"></div>
<div class="t d" style="left:296px;top:326px;letter-spacing:0.23px;">F /XF2/26/000013</div>
<div class="t d" style="left:417px;top:326px;letter-spacing:-0.34px;">09.01.2026</div>
<div class="t d" style="left:504px;top:326px;letter-spacing:0.13px;">Administrator systemu</div>
<div class="t d" style="left:855px;top:326px;letter-spacing:0.11px;">Generowanie XML</div>
<div class="t d" style="left:1198px;top:326px;letter-spacing:0.64px;">Dane</div>
<div class="a" style="left:276px;top:346px;width:13px;height:13px;box-sizing:border-box;border:1px solid #333;background:#fff;"></div>
<div class="t d" style="left:296px;top:345px;letter-spacing:0.23px;">F /XF2/26/000013</div>
<div class="t d" style="left:417px;top:345px;letter-spacing:-0.34px;">09.01.2026</div>
<div class="t d" style="left:504px;top:345px;letter-spacing:0.13px;">Administrator systemu</div>
<div class="t d" style="left:855px;top:345px;letter-spacing:0.55px;">Akceptacja</div>
<svg width="1600" height="869"><path d="M269 178.5v7l4.4-3.5z" fill="#000"/><path d="M1283.0 158 L1286.5 154.5 L1290.0 158" fill="none" stroke="#5a5a5a" stroke-width="1.9"/><path d="M1283.0 367 L1286.5 370.5 L1290.0 367" fill="none" stroke="#5a5a5a" stroke-width="1.9"/><path d="M280 381.0 L276.5 384.5 L280 388.0" fill="none" stroke="#5a5a5a" stroke-width="1.9"/><path d="M1268 381.0 L1271.5 384.5 L1268 388.0" fill="none" stroke="#5a5a5a" stroke-width="1.9"/></svg>
<svg width="1600" height="869"><g transform="translate(283.7,413.3)"><circle r="13.4" fill="#fff" opacity=".5"/><circle r="12.9" fill="url(#gSilver)"/><circle r="12.6" fill="none" stroke="#9e9e9e" stroke-opacity=".55" stroke-width=".7"/><text x="-5.9" y="8" font-family="Liberation Sans" font-weight="bold" font-size="22.5" fill="#0b55b3" stroke="#e6d2c0" stroke-width=".5" paint-order="stroke">P</text></g><g transform="translate(307.79999999999995,396.6) scale(1.0)"><path d="M5.6 15.2 L15.2 7.6 L19 6.2 L22.5 6.6 L26.8 8.6 L27 10.5 L21.5 13 L20 15.8 L16 16.5 L11.6 20.4 Q8.5 22.2 6.2 19.2 Q5 17 5.6 15.2 Z" fill="none" stroke="#fff" stroke-width="2.2" stroke-linejoin="round" opacity=".85"/><path d="M22 13.5 L27 9.2 L30.8 9.6 L32.8 14 L32.4 17.5 L27.4 26 Q24.5 28.6 20.4 26.6 Q18 24.6 18.6 22 L22.4 16.6 Z" fill="none" stroke="#fff" stroke-width="2.2" stroke-linejoin="round" opacity=".85"/><path d="M5.6 15.2 L15.2 7.6 L19 6.2 L22.5 6.6 L26.8 8.6 L27 10.5 L21.5 13 L20 15.8 L16 16.5 L11.6 20.4 Q8.5 22.2 6.2 19.2 Q5 17 5.6 15.2 Z" fill="#111317"/><path d="M22 13.5 L27 9.2 L30.8 9.6 L32.8 14 L32.4 17.5 L27.4 26 Q24.5 28.6 20.4 26.6 Q18 24.6 18.6 22 L22.4 16.6 Z" fill="#0d0f12"/><path d="M6.6 14.6 L15 8.2 L17.4 10.6 L9.6 16 Z" fill="#7b828a" opacity=".75"/><path d="M9.6 16 L17.4 10.6 L18.6 12.4 L11.4 17.6Z" fill="#3a4048" opacity=".8"/><path d="M20 21 L23.4 16.6 L26.6 17.6 L23.2 22.6 Z" fill="#7b828a" opacity=".7"/><path d="M23.2 22.6 L26.6 17.6 L28.6 18.4 L25.6 23.6Z" fill="#3a4048" opacity=".8"/><path d="M16 8 L19.4 7 L22 7.4 L20.4 9.2 Z" fill="#5a6068" opacity=".8"/><path d="M24 11 L28 9.8 L30.4 10.4 L28.6 12.6Z" fill="#474d55" opacity=".8"/><ellipse cx="8.9" cy="17.7" rx="3.5" ry="2.9" transform="rotate(42 8.9 17.7)" fill="#04070b"/><ellipse cx="9.4" cy="17.9" rx="2.7" ry="2.1" transform="rotate(42 9.4 17.9)" fill="url(#gLens)"/><ellipse cx="8.6" cy="16.6" rx="1.0" ry=".6" transform="rotate(42 8.6 16.6)" fill="#dff" opacity=".8"/><ellipse cx="22.2" cy="24.3" rx="3.7" ry="3.0" transform="rotate(38 22.2 24.3)" fill="#04070b"/><ellipse cx="22.8" cy="24.5" rx="2.9" ry="2.2" transform="rotate(38 22.8 24.5)" fill="url(#gLens)"/><ellipse cx="21.8" cy="23.2" rx="1.0" ry=".6" transform="rotate(38 21.8 23.2)" fill="#dff" opacity=".8"/></g><g transform="translate(344.2,397.2)"><rect x="4.4" y="3.6" width="25.1" height="25.9" fill="#fff" opacity=".75"/><rect x="4.9" y="4.1" width="24.1" height="24.9" fill="#4c6c82"/><rect x="4.9" y="4.1" width="24.1" height="3.7" fill="url(#gTblHead)"/><rect x="4.9" y="4.1" width="24.1" height="1" fill="#1c3f86"/><rect x="4.9" y="6.8" width="24.1" height="1" fill="#35bdea"/><rect x="5.6" y="8.4" width="2.3" height="1.6" fill="#ffffff"/><rect x="8.9" y="8.4" width="3.9" height="1.6" fill="#ffffff"/><rect x="13.8" y="8.4" width="4.1" height="1.6" fill="#ffffff"/><rect x="18.9" y="8.4" width="4.1" height="1.6" fill="#ffffff"/><rect x="24.0" y="8.4" width="3.9" height="1.6" fill="#ffffff"/><rect x="5.6" y="11.0" width="2.3" height="2.8" fill="#f4f7f8"/><rect x="8.9" y="11.0" width="3.9" height="2.8" fill="#f4f7f8"/><rect x="13.8" y="11.0" width="4.1" height="2.8" fill="#f4f7f8"/><rect x="18.9" y="11.0" width="4.1" height="2.8" fill="#f4f7f8"/><rect x="24.0" y="11.0" width="3.9" height="2.8" fill="#f4f7f8"/><rect x="5.6" y="14.9" width="2.3" height="2.2" fill="#eef2f4"/><rect x="8.9" y="14.9" width="3.9" height="2.2" fill="#eef2f4"/><rect x="13.8" y="14.9" width="4.1" height="2.2" fill="#eef2f4"/><rect x="18.9" y="14.9" width="4.1" height="2.2" fill="#eef2f4"/><rect x="24.0" y="14.9" width="3.9" height="2.2" fill="#eef2f4"/><rect x="5.6" y="18.2" width="2.3" height="2.6" fill="#e4eaed"/><rect x="8.9" y="18.2" width="3.9" height="2.6" fill="#e4eaed"/><rect x="13.8" y="18.2" width="4.1" height="2.6" fill="#e4eaed"/><rect x="18.9" y="18.2" width="4.1" height="2.6" fill="#e4eaed"/><rect x="24.0" y="18.2" width="3.9" height="2.6" fill="#e4eaed"/><rect x="5.6" y="21.9" width="2.3" height="2.0" fill="#d4dde2"/><rect x="8.9" y="21.9" width="3.9" height="2.0" fill="#d4dde2"/><rect x="13.8" y="21.9" width="4.1" height="2.0" fill="#d4dde2"/><rect x="18.9" y="21.9" width="4.1" height="2.0" fill="#d4dde2"/><rect x="24.0" y="21.9" width="3.9" height="2.0" fill="#d4dde2"/><rect x="5.6" y="24.9" width="2.3" height="3.2" fill="#c6d2d8"/><rect x="8.9" y="24.9" width="3.9" height="3.2" fill="#c6d2d8"/><rect x="13.8" y="24.9" width="4.1" height="3.2" fill="#c6d2d8"/><rect x="18.9" y="24.9" width="4.1" height="3.2" fill="#c6d2d8"/><rect x="24.0" y="24.9" width="3.9" height="3.2" fill="#c6d2d8"/><path d="M18.4 14.4 L20.3 13.5 L21.3 15.6 L20.7 19 L18.4 21.6 L17.9 27.2 Q15.2 30.6 12.4 27.2 L13.2 21.2 L15.6 16.8 Z" fill="#161a22"/><path d="M23.4 14.4 L21.5 13.5 L20.5 15.6 L21.1 19 L23.4 21.6 L23.9 27.2 Q26.6 30.6 29.4 27.2 L28.6 21.2 L26.2 16.8 Z" fill="#161a22"/><path d="M19.4 13.4 L22.4 13.4 L22.6 17.6 L20.9 18.8 L19.2 17.6Z" fill="#0c0e14"/><path d="M17.4 16.6 L14.4 21.6 L14 25 L16 21.8 L18.4 18Z" fill="#55657e" opacity=".85"/><path d="M24.4 16.6 L27.4 21.6 L27.8 25 L25.8 21.8 L23.4 18Z" fill="#55657e" opacity=".85"/><path d="M20 14.6 L21.8 14.6 L21.6 17 L20.2 17Z" fill="#4a5a70" opacity=".8"/><circle cx="15.1" cy="26.7" r="2.9" fill="#05060a"/><circle cx="15.1" cy="26.5" r="2.1" fill="#3a0ec4"/><ellipse cx="15.1" cy="27.6" rx="1.5" ry=".9" fill="#9478d8"/><circle cx="26.7" cy="26.7" r="2.9" fill="#05060a"/><circle cx="26.7" cy="26.5" r="2.1" fill="#3a0ec4"/><ellipse cx="26.7" cy="27.6" rx="1.5" ry=".9" fill="#9478d8"/></g><g transform="translate(381.2,403)"><rect x="0.4" y="21.6" width="27.2" height="3.6" rx="1.5" fill="#fafafa"/><rect x="1.6" y="22.6" width="24.8" height="1.2" fill="#dedede"/><rect x="0" y="0" width="28" height="20.8" rx="1.8" fill="url(#gBoard)"/><rect x=".4" y=".4" width="27.2" height="20" rx="1.5" fill="none" stroke="#55683a" stroke-width=".6"/><path d="M9.4 5.2V4.2H2.8L6.4 10.4 2.6 16.6H9.6V15.4" fill="none" stroke="#fff" stroke-width="1.5" stroke-linejoin="miter"/><rect x="5.6" y="2.2" width="1.2" height="1" fill="#fff"/><rect x="3.6" y="17.8" width="2.6" height="1" fill="#e8e8e8"/><rect x="8.6" y="17.8" width="1.2" height="1.2" fill="#fff"/><rect x="11.6" y="10" width="14.6" height="1.1" fill="#fff"/><path d="M12.4 5.4l2 3M14.4 5.4l-2 3" stroke="#fff" stroke-width="1"/><rect x="15" y="7.6" width="1.4" height="1" fill="#ddd"/><path d="M19 6.4l-1.4 1 1.4 1z" fill="#fff"/><path d="M25 5.2h-2.2v1.6h2v1.8h-2.4" stroke="#fff" stroke-width="1" fill="none"/><path d="M17.6 12.6h2.6l-1.2 1.6q1.6.4 1.2 1.8-.6 1.2-2.6.6" stroke="#fff" stroke-width="1" fill="none"/></g><ellipse cx="433" cy="424.2" rx="9" ry="1.6" fill="#c4c7cb" opacity=".8"/><g transform="translate(430.6,407.2)"><path d="M6.29 -1.20 L6.29 1.20 L4.82 1.04 L4.14 2.67 L5.29 3.60 L3.60 5.29 L2.67 4.14 L1.04 4.82 L1.20 6.29 L-1.20 6.29 L-1.04 4.82 L-2.67 4.14 L-3.60 5.29 L-5.29 3.60 L-4.14 2.67 L-4.82 1.04 L-6.29 1.20 L-6.29 -1.20 L-4.82 -1.04 L-4.14 -2.67 L-5.29 -3.60 L-3.60 -5.29 L-2.67 -4.14 L-1.04 -4.82 L-1.20 -6.29 L1.20 -6.29 L1.04 -4.82 L2.67 -4.14 L3.60 -5.29 L5.29 -3.60 L4.14 -2.67 L4.82 -1.04Z" fill="#fff" stroke="#fff" stroke-width="1.6" stroke-linejoin="round" opacity=".7"/><path d="M6.29 -1.20 L6.29 1.20 L4.82 1.04 L4.14 2.67 L5.29 3.60 L3.60 5.29 L2.67 4.14 L1.04 4.82 L1.20 6.29 L-1.20 6.29 L-1.04 4.82 L-2.67 4.14 L-3.60 5.29 L-5.29 3.60 L-4.14 2.67 L-4.82 1.04 L-6.29 1.20 L-6.29 -1.20 L-4.82 -1.04 L-4.14 -2.67 L-5.29 -3.60 L-3.60 -5.29 L-2.67 -4.14 L-1.04 -4.82 L-1.20 -6.29 L1.20 -6.29 L1.04 -4.82 L2.67 -4.14 L3.60 -5.29 L5.29 -3.60 L4.14 -2.67 L4.82 -1.04Z" fill="url(#gGear)" stroke="#1f4a80" stroke-opacity=".55" stroke-width=".7" stroke-linejoin="round"/><ellipse rx="2.5" ry="3.4" fill="#0d2c58" opacity=".55" transform="translate(.5,-.3)"/><ellipse rx="1.95" ry="2.9" fill="#f4f6f8"/></g><g transform="translate(442.6,407.6)"><path d="M6.17 1.28 L5.27 3.46 L3.99 2.76 L2.76 3.99 L3.46 5.27 L1.28 6.17 L0.87 4.77 L-0.87 4.77 L-1.28 6.17 L-3.46 5.27 L-2.76 3.99 L-3.99 2.76 L-5.27 3.46 L-6.17 1.28 L-4.77 0.87 L-4.77 -0.87 L-6.17 -1.28 L-5.27 -3.46 L-3.99 -2.76 L-2.76 -3.99 L-3.46 -5.27 L-1.28 -6.17 L-0.87 -4.77 L0.87 -4.77 L1.28 -6.17 L3.46 -5.27 L2.76 -3.99 L3.99 -2.76 L5.27 -3.46 L6.17 -1.28 L4.77 -0.87 L4.77 0.87Z" fill="#fff" stroke="#fff" stroke-width="1.6" stroke-linejoin="round" opacity=".7"/><path d="M6.17 1.28 L5.27 3.46 L3.99 2.76 L2.76 3.99 L3.46 5.27 L1.28 6.17 L0.87 4.77 L-0.87 4.77 L-1.28 6.17 L-3.46 5.27 L-2.76 3.99 L-3.99 2.76 L-5.27 3.46 L-6.17 1.28 L-4.77 0.87 L-4.77 -0.87 L-6.17 -1.28 L-5.27 -3.46 L-3.99 -2.76 L-2.76 -3.99 L-3.46 -5.27 L-1.28 -6.17 L-0.87 -4.77 L0.87 -4.77 L1.28 -6.17 L3.46 -5.27 L2.76 -3.99 L3.99 -2.76 L5.27 -3.46 L6.17 -1.28 L4.77 -0.87 L4.77 0.87Z" fill="url(#gGear)" stroke="#1f4a80" stroke-opacity=".55" stroke-width=".7" stroke-linejoin="round"/><ellipse rx="2.5" ry="3.4" fill="#0d2c58" opacity=".55" transform="translate(.5,-.3)"/><ellipse rx="1.95" ry="2.9" fill="#f4f6f8"/></g><g transform="translate(432.7,420.5)"><path d="M6.27 1.30 L5.35 3.51 L4.05 2.80 L2.80 4.05 L3.51 5.35 L1.30 6.27 L0.89 4.85 L-0.89 4.85 L-1.30 6.27 L-3.51 5.35 L-2.80 4.05 L-4.05 2.80 L-5.35 3.51 L-6.27 1.30 L-4.85 0.89 L-4.85 -0.89 L-6.27 -1.30 L-5.35 -3.51 L-4.05 -2.80 L-2.80 -4.05 L-3.51 -5.35 L-1.30 -6.27 L-0.89 -4.85 L0.89 -4.85 L1.30 -6.27 L3.51 -5.35 L2.80 -4.05 L4.05 -2.80 L5.35 -3.51 L6.27 -1.30 L4.85 -0.89 L4.85 0.89Z" fill="#fff" stroke="#fff" stroke-width="1.6" stroke-linejoin="round" opacity=".7"/><path d="M6.27 1.30 L5.35 3.51 L4.05 2.80 L2.80 4.05 L3.51 5.35 L1.30 6.27 L0.89 4.85 L-0.89 4.85 L-1.30 6.27 L-3.51 5.35 L-2.80 4.05 L-4.05 2.80 L-5.35 3.51 L-6.27 1.30 L-4.85 0.89 L-4.85 -0.89 L-6.27 -1.30 L-5.35 -3.51 L-4.05 -2.80 L-2.80 -4.05 L-3.51 -5.35 L-1.30 -6.27 L-0.89 -4.85 L0.89 -4.85 L1.30 -6.27 L3.51 -5.35 L2.80 -4.05 L4.05 -2.80 L5.35 -3.51 L6.27 -1.30 L4.85 -0.89 L4.85 0.89Z" fill="url(#gGear)" stroke="#1f4a80" stroke-opacity=".55" stroke-width=".7" stroke-linejoin="round"/><ellipse rx="2.5" ry="3.4" fill="#0d2c58" opacity=".55" transform="translate(.5,-.3)"/><ellipse rx="1.95" ry="2.9" fill="#f4f6f8"/></g><g transform="translate(446,420.90000000000003)"><path d="M6.19 -1.18 L6.19 1.18 L4.74 1.02 L4.08 2.63 L5.21 3.54 L3.54 5.21 L2.63 4.08 L1.02 4.74 L1.18 6.19 L-1.18 6.19 L-1.02 4.74 L-2.63 4.08 L-3.54 5.21 L-5.21 3.54 L-4.08 2.63 L-4.74 1.02 L-6.19 1.18 L-6.19 -1.18 L-4.74 -1.02 L-4.08 -2.63 L-5.21 -3.54 L-3.54 -5.21 L-2.63 -4.08 L-1.02 -4.74 L-1.18 -6.19 L1.18 -6.19 L1.02 -4.74 L2.63 -4.08 L3.54 -5.21 L5.21 -3.54 L4.08 -2.63 L4.74 -1.02Z" fill="#fff" stroke="#fff" stroke-width="1.6" stroke-linejoin="round" opacity=".7"/><path d="M6.19 -1.18 L6.19 1.18 L4.74 1.02 L4.08 2.63 L5.21 3.54 L3.54 5.21 L2.63 4.08 L1.02 4.74 L1.18 6.19 L-1.18 6.19 L-1.02 4.74 L-2.63 4.08 L-3.54 5.21 L-5.21 3.54 L-4.08 2.63 L-4.74 1.02 L-6.19 1.18 L-6.19 -1.18 L-4.74 -1.02 L-4.08 -2.63 L-5.21 -3.54 L-3.54 -5.21 L-2.63 -4.08 L-1.02 -4.74 L-1.18 -6.19 L1.18 -6.19 L1.02 -4.74 L2.63 -4.08 L3.54 -5.21 L5.21 -3.54 L4.08 -2.63 L4.74 -1.02Z" fill="url(#gGear)" stroke="#1f4a80" stroke-opacity=".55" stroke-width=".7" stroke-linejoin="round"/><ellipse rx="2.5" ry="3.4" fill="#0d2c58" opacity=".55" transform="translate(.5,-.3)"/><ellipse rx="1.95" ry="2.9" fill="#f4f6f8"/></g><g transform="translate(1012,400.4)"><path d="M19.6 22.4 L25 20.6 L22 25Z" fill="#bdbdbd"/><path d="M0.4 1.2 Q0.4 0 1.6 0.2 L20.4 3.6 Q21.8 4 21.8 5.4 L21.8 25.4 Q21.8 26.6 20.4 26.4 L1.6 22.8 Q0.4 22.6 0.4 21.4 Z" fill="#2e2e2e"/><path d="M1.8 2 L20.4 5.2 L20.4 24.6 L1.8 21.2 Z" fill="#dcdcdc"/><path d="M2.8 4 L7.9 4.8 L7.9 22.2 L2.8 21.2Z" fill="#c80a0a"/><path d="M8.8 13.6 Q11.4 13.2 13.9 14.6 L13.9 23.4 L8.8 22.4Z" fill="#1f66c8"/><path d="M15 10.8 L19.8 11.6 L19.8 24.4 L15 23.6Z" fill="#16961e"/><path d="M1 22.4 L20.8 26" stroke="#6e6e6e" stroke-width=".8"/></g><g transform="translate(1051.8,394.8)"><path d="M4.8 12.8 L13.2 5 L14 6.4 L8.4 12.6Z" fill="#fff"/><path d="M8.1 12.4 L13.7 6.2 L26.7 5 L26.7 31.9 L8.1 28.6 Z" fill="#fff" stroke="#fff" stroke-width="2.4" stroke-linejoin="round" opacity=".8"/><path d="M8.1 12.4 L13.7 6.2 L26.7 5 L26.7 31.9 L8.1 28.6 Z" fill="#f4faff" stroke="#6fc0f8" stroke-width="1.1" stroke-linejoin="round"/><path d="M26.5 5.4 L26.5 31.6" stroke="#7aa6d2" stroke-width="1"/><path d="M10 13 L13.8 9.2 L24.4 8.4 L24.4 29.2 L10 26.8 Z" fill="#a9d5f8"/><path d="M12.8 11.4 L9 13.4 L11.4 15.4Z" fill="#8cc4f0" opacity=".8"/><defs><linearGradient id="gShH" x1="0" y1="0" x2="1" y2="0"><stop offset="0" stop-color="#58aef2"/><stop offset="1" stop-color="#168af0"/></linearGradient></defs><path d="M13.7 9.4 L24 8.7 L24 11.7 L13.7 12.3Z" fill="url(#gShH)"/><rect x="13.3" y="12.9" width="1.7" height="1.7" rx=".7" fill="#c6e05a"/><rect x="15.9" y="13" width="3.4" height="1.6" rx=".7" fill="#ffffff"/><rect x="21" y="12.8" width="2" height="1.7" rx=".7" fill="#ffffff"/><rect x="12.8" y="15.8" width="1.8" height="1.6" rx=".7" fill="#ffffff"/><rect x="15.3" y="15.6" width="4.2" height="1.9" rx=".7" fill="#f6f81e"/><rect x="21" y="15.6" width="2" height="1.7" rx=".7" fill="#ffffff"/><rect x="11.8" y="18.7" width="2.8" height="1.7" rx=".7" fill="#ffffff"/><rect x="15.3" y="18.6" width="4.2" height="2.1" rx=".7" fill="#f0f428"/><rect x="20.4" y="18.2" width="2.7" height="2.8" rx=".7" fill="#f04010"/><rect x="11.8" y="21.8" width="2.8" height="1.7" rx=".7" fill="#ffffff"/><rect x="15.3" y="21.8" width="4.4" height="2.2" rx=".7" fill="#f04818"/><rect x="20.9" y="22" width="2.2" height="1.9" rx=".7" fill="#ffffff"/><rect x="11.1" y="24.3" width="3.5" height="2.2" rx=".7" fill="#eef020"/><rect x="15.9" y="24.9" width="3.4" height="1.6" rx=".7" fill="#ffffff"/><rect x="20.9" y="25.3" width="2.2" height="1.6" rx=".7" fill="#ffffff"/></g><g transform="translate(1103.4,400)"><path d="M0.2 1.4 Q0.2 0 1.8 0.2 L17.6 2.8 L21.6 6.4 L21.6 25.8 Q21.6 27.2 20.2 26.9 L1.6 22.8 Q0.2 22.4 0.2 21 Z" fill="#111"/><path d="M1.4 2 L4.2 2.4 L4.2 8 L1.4 7.6Z" fill="#555"/><path d="M4.4 1.6 L14.6 3.4 L14.6 9 L4.4 7.4 Z" fill="#bcbcbc"/><path d="M11.4 3.4 L13.6 3.8 L13.6 8.4 L11.4 8 Z" fill="#6e6e6e"/><path d="M3 9.4 L17.6 12 L17.6 24.4 L3 21.2 Z" fill="url(#gLabel)"/><path d="M5.4 17.6h1M8.4 18.4h2.4M13 19.6h1" stroke="#b8c0e0" stroke-width=".7"/><path d="M4 20.2 L17 23" stroke="#c4c4c4" stroke-width=".6"/></g><g transform="translate(1145,401.6)"><path d="M4 19 L26 21 L18 24 L2 21Z" fill="#f8f8f8" opacity=".9"/><path d="M7.4 2.0 Q7.4 0.4 9.0 0.6000000000000001 L24.799999999999997 3.1999999999999997 Q26.200000000000003 3.6 26.200000000000003 5.0 L26.200000000000003 18.799999999999997 L24.0 19.0 L7.800000000000001 15.8 Z" fill="url(#gWin)" stroke="#82a6be" stroke-width="1"/><path d="M8.0 3.8 L25.6 6.800000000000001" stroke="#9cc0d6" stroke-width="1.8"/><path d="M8.200000000000001 1.7999999999999998 L25.4 4.6000000000000005" stroke="#d8e8f0" stroke-width="1.2"/><path d="M18.8 4.3 L23.0 5.0" stroke="#3f8fd8" stroke-width="1.4"/><path d="M0.4 7.199999999999999 Q0.4 5.6 2.0 5.8 L17.799999999999997 8.399999999999999 Q19.2 8.8 19.2 10.2 L19.2 24.0 L17.0 24.200000000000003 L0.8 21.0 Z" fill="url(#gWin)" stroke="#82a6be" stroke-width="1"/><path d="M1.0 9.0 L18.599999999999998 12.0" stroke="#9cc0d6" stroke-width="1.8"/><path d="M1.2000000000000002 7.0 L18.4 9.8" stroke="#d8e8f0" stroke-width="1.2"/><path d="M11.8 9.5 L16.0 10.2" stroke="#3f8fd8" stroke-width="1.4"/></g><g transform="translate(1201,413.8)"><circle r="14.0" fill="#fff" opacity=".55"/><circle r="13.1" fill="#d6d6d6"/><circle r="12.4" fill="#a4a4a4"/><circle r="11.6" fill="#d0d0d0"/><circle r="11.0" fill="#a8a8a8"/><circle r="10.55" fill="url(#gGreen)"/><path d="M-10.4 1.5 A10.55 10.55 0 0 0 2 10.35 Q-5 6 -10.4 1.5Z" fill="#006a00" opacity=".6"/><path d="M-3.2 -0.6 Q-1 -2.8 3 -2.2 Q0.5 -0.2 -1.4 1.6 Q1 2.4 2.6 1 Q0.5 3.4 -2.6 2.6Z" fill="#005a00" opacity=".7"/><path d="M-10.2 -2.6 A10.55 10.55 0 0 1 10.2 -2.6 Q0 -6.5 -10.2 -2.6Z" fill="#fff" opacity=".18"/><path d="M0.2 -7.8 Q6.8 -7.6 7.6 -1.4 L10 -1.6 L5.6 5 L1.2 -0.8 L3.8 -1 Q3.4 -4 -0.4 -4.2Z" fill="url(#gWhiteG)"/><path d="M-0.4 7.9 Q-7 7.6 -7.6 1.6 L-10 1.8 L-5.8 -5 L-1.2 0.8 L-3.8 1 Q-3.6 4.2 0.2 4.4Z" fill="url(#gWhiteG)"/></g><g transform="translate(1243.6,413.8)"><circle r="14.0" fill="#fff" opacity=".55"/><circle r="13.1" fill="#d6d6d6"/><circle r="12.4" fill="#a4a4a4"/><circle r="11.6" fill="#d0d0d0"/><circle r="11.0" fill="#a8a8a8"/><circle r="10.55" fill="url(#gBlueB)"/><path d="M-10.45 1.5 Q-5 -0.4 0.2 -3.9 Q5 -4.4 10.3 -2.4 A10.55 10.55 0 0 0 -10.45 1.5Z" fill="url(#gBlueT)"/><path d="M-10.45 1.5 Q-5 -0.4 0.2 -3.9" fill="none" stroke="#86a6e8" stroke-width=".5" opacity=".7"/><rect x="-4.5" y="-5" width="2.9" height="10" fill="url(#gWhiteV)"/><path d="M-1.6 0L4.6 -5V5Z" fill="url(#gWhiteV)"/></g><g transform="translate(1278,413.8)"><circle r="14.0" fill="#fff" opacity=".55"/><circle r="13.1" fill="#d6d6d6"/><circle r="12.4" fill="#a4a4a4"/><circle r="11.6" fill="#d0d0d0"/><circle r="11.0" fill="#a8a8a8"/><circle r="10.55" fill="url(#gBlueB)"/><path d="M-10.45 1.5 Q-5 -0.4 0.2 -3.9 Q5 -4.4 10.3 -2.4 A10.55 10.55 0 0 0 -10.45 1.5Z" fill="url(#gBlueT)"/><path d="M-10.45 1.5 Q-5 -0.4 0.2 -3.9" fill="none" stroke="#86a6e8" stroke-width=".5" opacity=".7"/><rect x="1.9" y="-5" width="2.9" height="10" fill="url(#gWhiteV)"/><path d="M1.9 0L-4.3 -5V5Z" fill="url(#gWhiteV)"/></g></svg>
<div class="a" style="left:463px;top:593px;width:190px;height:240px;background:rgba(0,0,0,0.55);filter:blur(1.3px);"></div>
<div class="a" style="left:459px;top:588px;width:191px;height:243px;background:#f0f0f0;box-sizing:border-box;border:1px solid #dadada;border-right-color:#8c8c8c;border-bottom-color:#8c8c8c;"></div>
<div class="t m" style="left:482px;top:590px;letter-spacing:0.47px;"><u>A</u>kceptacja</div>
<div class="t m" style="left:482px;top:609px;letter-spacing:0.19px;"><u>G</u>eneruj / Waliduj XML</div>
<div class="t m" style="left:482px;top:628px;letter-spacing:0.68px;"><u>W</u>alidacja</div>
<div class="t m" style="left:482px;top:647px;letter-spacing:0.27px;"><u>P</u>odgląd XML</div>
<div class="t m" style="left:482px;top:666px;letter-spacing:0.40px;">Podgląd PDF</div>
<div class="t m" style="left:482px;top:685px;letter-spacing:0.25px;">Wyślij do KSeF</div>
<div class="t m" style="left:482px;top:704px;letter-spacing:0.15px;">Pobierz status</div>
<div class="t m" style="left:482px;top:723px;letter-spacing:0.19px;">Pobierz UPO</div>
<div class="t m" style="left:482px;top:742px;letter-spacing:0.38px;">Podgląd UPO</div>
<div class="t m" style="left:482px;top:761px;letter-spacing:0.30px;">Podgląd konfiguracji</div>
<div class="a" style="left:462px;top:781px;width:183px;height:19px;background:#0078d7;"></div>
<div class="t m" style="left:482px;top:780px;letter-spacing:0.16px;color:#fff;">Historia dokumentu</div>
<div class="t m" style="left:482px;top:799px;letter-spacing:0.38px;">Wycofaj akceptację</div>
<div class="a" style="left:251px;top:113px;width:1057px;height:331px;background:transparent;box-sizing:border-box;border:3px solid #ff0000;"></div>
<div class="a" style="left:455px;top:777px;width:188px;height:25px;background:transparent;box-sizing:border-box;border:3px solid #ff0000;"></div>
<svg width="1600" height="869"><line x1="644.3" y1="779" x2="701.4" y2="465" stroke="#ff0000" stroke-width="3"/><path d="M704.7 450 L695.3 467 L701.6 465.2 L707 469 Z" fill="#ff0000"/></svg>
</body></html>
